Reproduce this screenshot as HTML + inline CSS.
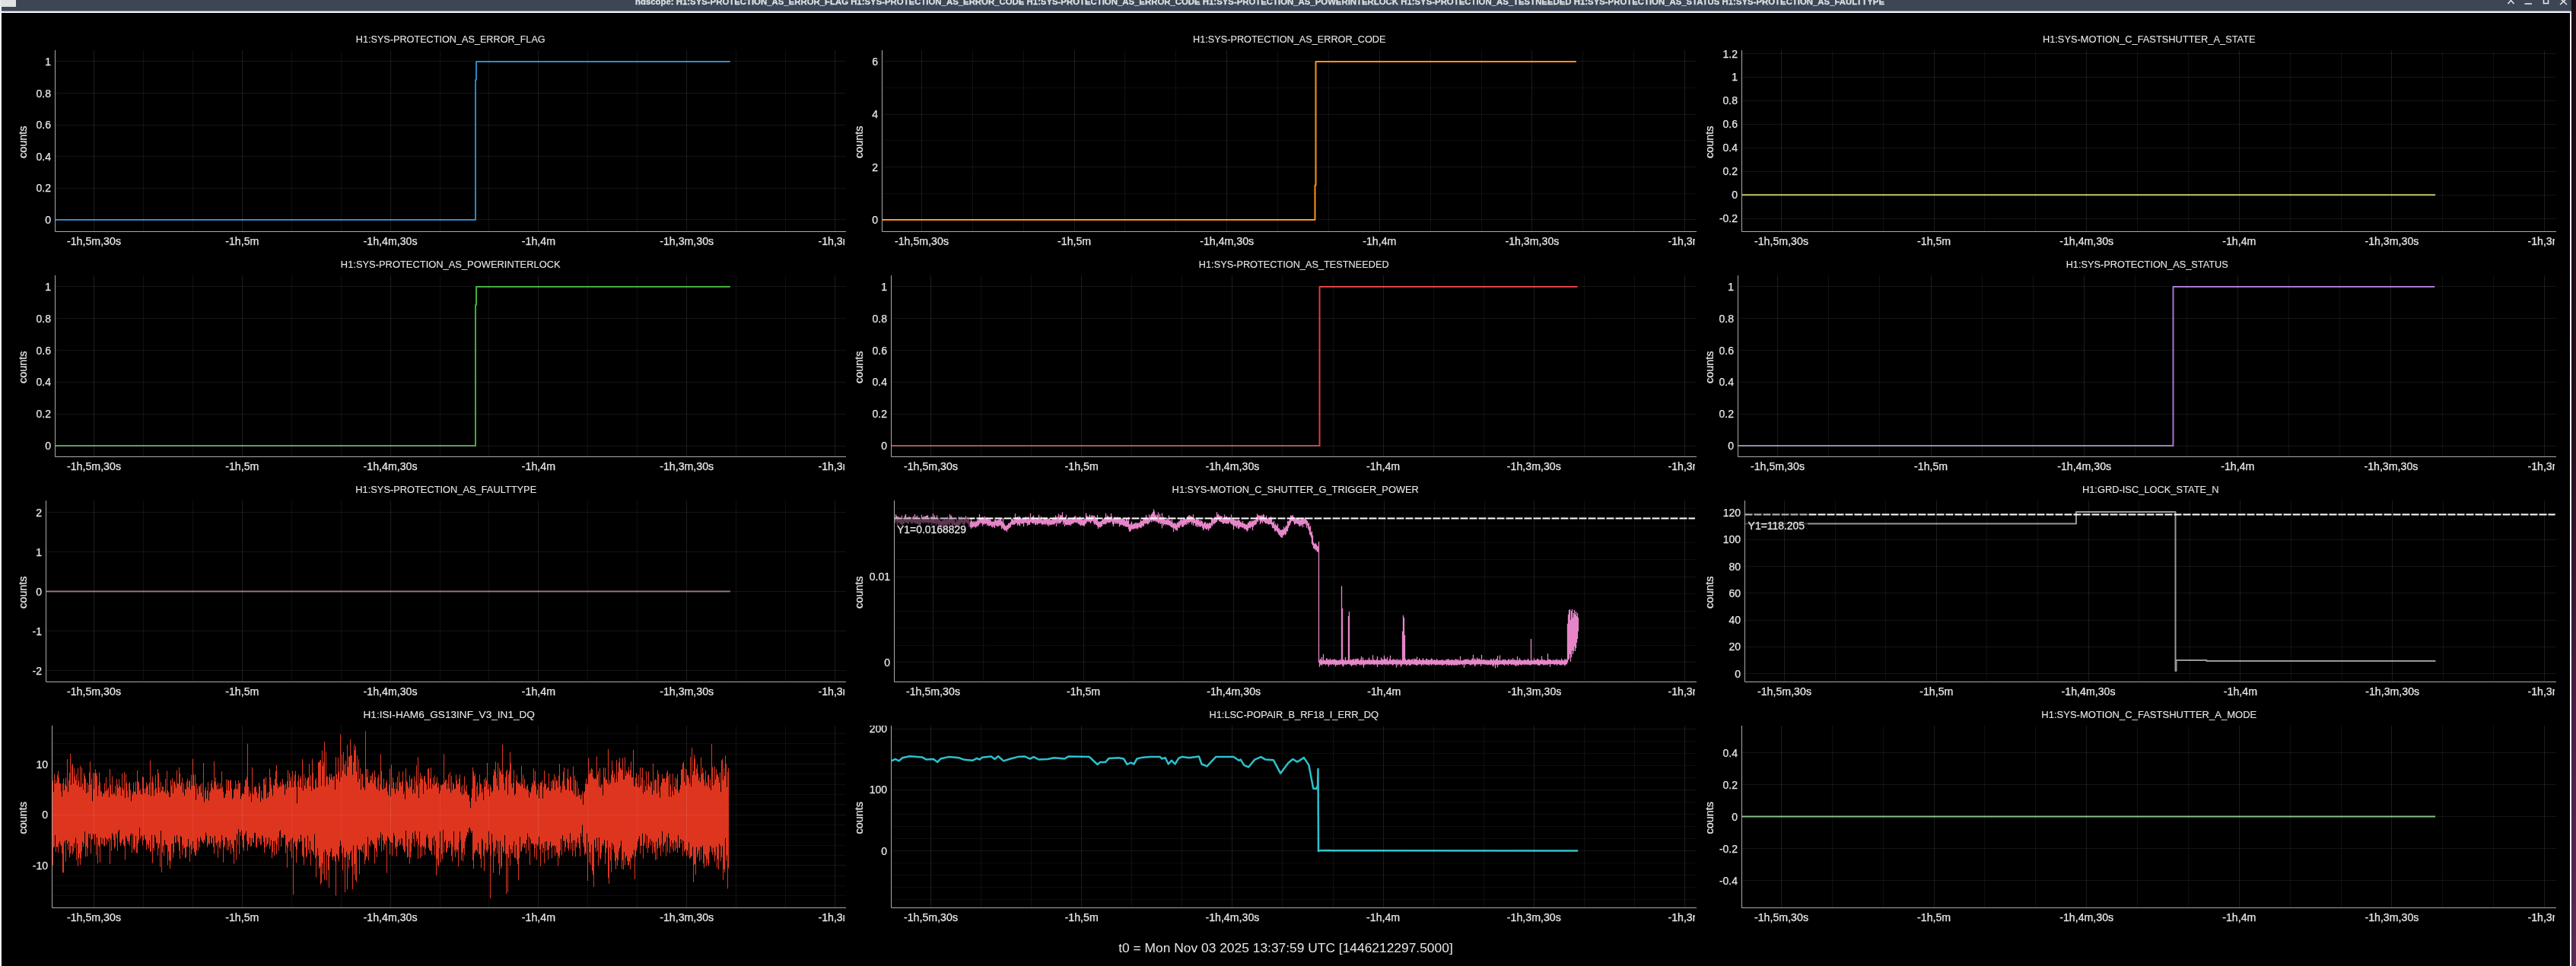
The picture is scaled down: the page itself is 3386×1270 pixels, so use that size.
<!DOCTYPE html><html><head><meta charset="utf-8"><style>html,body{margin:0;padding:0;background:#000;overflow:hidden;width:3386px;height:1270px}svg{display:block;will-change:transform}</style></head><body>
<svg width="3386" height="1270" viewBox="0 0 3386 1270" font-family='"Liberation Sans", sans-serif'>
<style>text{stroke:#e6e6e6;stroke-width:0.25px;paint-order:stroke}</style>
<rect width="3386" height="1270" fill="#000"/>
<defs><linearGradient id="dsk" x1="0" y1="0" x2="0" y2="1"><stop offset="0" stop-color="#1c0a14"/><stop offset="0.45" stop-color="#24101c"/><stop offset="0.75" stop-color="#4a2046"/><stop offset="1" stop-color="#5c2a58"/></linearGradient></defs>
<rect x="3380" y="0" width="6" height="1270" fill="url(#dsk)"/>
<rect x="0" y="0" width="3380" height="15" fill="#3c4655"/>
<rect x="0" y="14.6" width="3380" height="2.4" fill="#eef2f8"/>
<rect x="0" y="0" width="2" height="1270" fill="#eef0f4"/>
<rect x="3378" y="15" width="2" height="1270" fill="#eef0f4"/>
<rect x="1" y="0" width="20" height="9" fill="#dfe2e4"/>
<text x="835" y="6" font-size="11.5" font-weight="bold" fill="#dde1e6" textLength="1642" lengthAdjust="spacingAndGlyphs">ndscope: H1:SYS-PROTECTION_AS_ERROR_FLAG H1:SYS-PROTECTION_AS_ERROR_CODE H1:SYS-PROTECTION_AS_ERROR_CODE H1:SYS-PROTECTION_AS_POWERINTERLOCK H1:SYS-PROTECTION_AS_TESTNEEDED H1:SYS-PROTECTION_AS_STATUS H1:SYS-PROTECTION_AS_FAULTTYPE</text>
<g stroke="#e4e6ea" stroke-width="1.6" fill="none"><path d="M3296.5 5 L3300.5 0.5 L3304.5 5"/><path d="M3318.5 5 H3328"/><rect x="3343.5" y="-1" width="6" height="5.5"/><path d="M3365 6 L3374 -2 M3365 -2 L3374 6"/></g>
<defs>
<clipPath id="c00"><rect x="72.5" y="66" width="1039.5" height="238.5"/></clipPath>
<clipPath id="l00"><rect x="-127.5" y="304.5" width="1237.5" height="40"/></clipPath>
<clipPath id="t00"><rect x="-127.5" y="66" width="200" height="268.5"/></clipPath>
<clipPath id="c01"><rect x="1159.5" y="66" width="1070.5" height="238.5"/></clipPath>
<clipPath id="l01"><rect x="959.5" y="304.5" width="1268.5" height="40"/></clipPath>
<clipPath id="t01"><rect x="959.5" y="66" width="200" height="268.5"/></clipPath>
<clipPath id="c02"><rect x="2289.5" y="66" width="1070.5" height="238.5"/></clipPath>
<clipPath id="l02"><rect x="2089.5" y="304.5" width="1268.5" height="40"/></clipPath>
<clipPath id="t02"><rect x="2089.5" y="66" width="200" height="268.5"/></clipPath>
<clipPath id="c10"><rect x="72.5" y="362" width="1039.5" height="238.5"/></clipPath>
<clipPath id="l10"><rect x="-127.5" y="600.5" width="1237.5" height="40"/></clipPath>
<clipPath id="t10"><rect x="-127.5" y="362" width="200" height="268.5"/></clipPath>
<clipPath id="c11"><rect x="1171.5" y="362" width="1058.5" height="238.5"/></clipPath>
<clipPath id="l11"><rect x="971.5" y="600.5" width="1256.5" height="40"/></clipPath>
<clipPath id="t11"><rect x="971.5" y="362" width="200" height="268.5"/></clipPath>
<clipPath id="c12"><rect x="2284.5" y="362" width="1075.5" height="238.5"/></clipPath>
<clipPath id="l12"><rect x="2084.5" y="600.5" width="1273.5" height="40"/></clipPath>
<clipPath id="t12"><rect x="2084.5" y="362" width="200" height="268.5"/></clipPath>
<clipPath id="c20"><rect x="60.5" y="658" width="1051.5" height="238.5"/></clipPath>
<clipPath id="l20"><rect x="-139.5" y="896.5" width="1249.5" height="40"/></clipPath>
<clipPath id="t20"><rect x="-139.5" y="658" width="200" height="268.5"/></clipPath>
<clipPath id="c21"><rect x="1175.5" y="658" width="1054.5" height="238.5"/></clipPath>
<clipPath id="l21"><rect x="975.5" y="896.5" width="1252.5" height="40"/></clipPath>
<clipPath id="t21"><rect x="975.5" y="658" width="200" height="268.5"/></clipPath>
<clipPath id="c22"><rect x="2293.5" y="658" width="1066.5" height="238.5"/></clipPath>
<clipPath id="l22"><rect x="2093.5" y="896.5" width="1264.5" height="40"/></clipPath>
<clipPath id="t22"><rect x="2093.5" y="658" width="200" height="268.5"/></clipPath>
<clipPath id="c30"><rect x="68.5" y="954" width="1043.5" height="239.5"/></clipPath>
<clipPath id="l30"><rect x="-131.5" y="1193.5" width="1241.5" height="40"/></clipPath>
<clipPath id="t30"><rect x="-131.5" y="954" width="200" height="269.5"/></clipPath>
<clipPath id="c31"><rect x="1171.5" y="954" width="1058.5" height="239.5"/></clipPath>
<clipPath id="l31"><rect x="971.5" y="1193.5" width="1256.5" height="40"/></clipPath>
<clipPath id="t31"><rect x="971.5" y="954" width="200" height="269.5"/></clipPath>
<clipPath id="c32"><rect x="2289.5" y="954" width="1070.5" height="239.5"/></clipPath>
<clipPath id="l32"><rect x="2089.5" y="1193.5" width="1268.5" height="40"/></clipPath>
<clipPath id="t32"><rect x="2089.5" y="954" width="200" height="269.5"/></clipPath>
</defs>
<path d="M1159.5 254.5H2230M1159.5 184.5H2230M1159.5 115.5H2230" stroke="#fff" stroke-opacity="0.05" stroke-width="1" fill="none"/>
<path d="M1175.5 848.5H2230M1175.5 825.5H2230M1175.5 803.5H2230M1175.5 780.5H2230M1175.5 735.5H2230M1175.5 713.5H2230M1175.5 691.5H2230M1175.5 668.5H2230" stroke="#fff" stroke-opacity="0.05" stroke-width="1" fill="none"/>
<path d="M68.5 1191.5H1112M68.5 1177.5H1112M68.5 1164.5H1112M68.5 1151.5H1112M68.5 1124.5H1112M68.5 1111.5H1112M68.5 1097.5H1112M68.5 1084.5H1112M68.5 1057.5H1112M68.5 1044.5H1112M68.5 1031.5H1112M68.5 1017.5H1112M68.5 991.5H1112M68.5 977.5H1112M68.5 964.5H1112" stroke="#fff" stroke-opacity="0.05" stroke-width="1" fill="none"/>
<path d="M1171.5 1182.5H2230M1171.5 1166.5H2230M1171.5 1150.5H2230M1171.5 1134.5H2230M1171.5 1102.5H2230M1171.5 1086.5H2230M1171.5 1070.5H2230M1171.5 1054.5H2230M1171.5 1022.5H2230M1171.5 1006.5H2230M1171.5 990.5H2230M1171.5 974.5H2230" stroke="#fff" stroke-opacity="0.05" stroke-width="1" fill="none"/>
<path d="M72.5 289 L625 289 L625 105 L626 105 L626 81 L959.84 81" stroke="#2e86c4" stroke-width="2" fill="none" stroke-linejoin="round" />
<path d="M1159.5 289 L1728.5 289 L1728.5 243.5 L1729.5 243.5 L1729.5 81 L2071.74 81" stroke="#ff9114" stroke-width="2" fill="none" stroke-linejoin="round" />
<path d="M2289.5 256.24 L3201.07 256.24" stroke="#c0c46e" stroke-width="2" fill="none" stroke-linejoin="round" />
<path d="M72.5 586 L625 586" stroke="#5f965f" stroke-width="2" fill="none" stroke-linejoin="round" />
<path d="M625 587 L625 401 L626 401 L626 377 L959.84 377" stroke="#3caf37" stroke-width="2" fill="none" stroke-linejoin="round" />
<path d="M1171.5 586 L1734.5 586" stroke="#a85050" stroke-width="2" fill="none" stroke-linejoin="round" />
<path d="M1734.5 587 L1734.5 377 L2073.45 377" stroke="#e23a3a" stroke-width="2" fill="none" stroke-linejoin="round" />
<path d="M2284.5 586 L2856.5 586" stroke="#9682aa" stroke-width="2" fill="none" stroke-linejoin="round" />
<path d="M2856.5 587 L2856.5 377 L3200.36 377" stroke="#a573d2" stroke-width="2" fill="none" stroke-linejoin="round" />
<path d="M60.5 777.5 L959.84 777.5" stroke="#8c736e" stroke-width="2" fill="none" stroke-linejoin="round" />
<g clip-path="url(#c21)">
<path d="M1176.5 680.37V686.81M1177.5 676.15V688.23M1178.5 678.29V685.6M1179.5 679.09V690.82M1180.5 679.68V686.73M1181.5 679.44V687.56M1182.5 681.35V687.52M1183.5 681.53V689.04M1184.5 681.39V689.31M1185.5 677.71V690.94M1186.5 680.99V689.73M1187.5 681.64V688.76M1188.5 680.72V688.67M1189.5 677.66V685.89M1190.5 676.07V687.37M1191.5 681.19V687.28M1192.5 680.21V687.4M1193.5 679.44V688.5M1194.5 680.05V688.75M1195.5 679.32V685.85M1196.5 679.78V686.48M1197.5 680.1V687.68M1198.5 681.77V688.7M1199.5 680.26V687.85M1200.5 678.59V686.8M1201.5 681.35V687.2M1202.5 675.94V688.21M1203.5 679.65V688.47M1204.5 679.81V687.99M1205.5 677.81V689.31M1206.5 681.69V688.82M1207.5 681.55V689.83M1208.5 680.79V691.47M1209.5 682.51V690.94M1210.5 681.43V689.14M1211.5 676.84V685.98M1212.5 679.86V686.73M1213.5 680.25V687.93M1214.5 678.6V687.07M1215.5 679.63V686.56M1216.5 678.82V687.2M1217.5 677.96V687.59M1218.5 677.93V687.52M1219.5 677.18V686.62M1220.5 681.45V689.27M1221.5 680.63V687.3M1222.5 680.42V687.29M1223.5 679.45V686.88M1224.5 679.6V691.03M1225.5 679.81V687.35M1226.5 675.13V688.14M1227.5 679.9V688.08M1228.5 677.79V688.08M1229.5 681.09V688.47M1230.5 682.34V690.91M1231.5 677.38V687.84M1232.5 681.86V689.59M1233.5 681.72V690.21M1234.5 682.19V690.71M1235.5 683.79V692M1236.5 684.74V693.89M1237.5 684.93V690.67M1238.5 684.32V692.21M1239.5 683.85V689.68M1240.5 683.24V691.9M1241.5 681.53V689.41M1242.5 683.59V690.23M1243.5 684.01V694.6M1244.5 682.78V691.57M1245.5 679.59V689.79M1246.5 681.11V687.69M1247.5 681.46V691.16M1248.5 675.94V689.95M1249.5 679.32V687.46M1250.5 677.52V688.06M1251.5 680.26V693.07M1252.5 682.13V690.69M1253.5 683.65V690.28M1254.5 682.96V689.93M1255.5 686.17V695.33M1256.5 686.53V693.57M1257.5 681.93V692.55M1258.5 684.27V692.1M1259.5 683.64V692.46M1260.5 679.29V690.27M1261.5 681.42V690.04M1262.5 681.75V688.68M1263.5 679.18V687.57M1264.5 681.65V687.62M1265.5 681.06V689.24M1266.5 684.16V689.63M1267.5 680.88V691.35M1268.5 682.03V688.61M1269.5 678.49V686.28M1270.5 680.73V687.22M1271.5 680.15V688.19M1272.5 681.02V688.82M1273.5 682.67V692.26M1274.5 685.44V693.45M1275.5 686.36V692.83M1276.5 680.97V695.27M1277.5 684.98V693.46M1278.5 686.45V693.51M1279.5 685.21V692.42M1280.5 687V692.8M1281.5 684.87V691.89M1282.5 686.31V694.08M1283.5 685.56V692.53M1284.5 683.37V690.94M1285.5 684.21V692.19M1286.5 681.92V690.17M1287.5 676.07V688.72M1288.5 680.66V686.96M1289.5 681.11V688.15M1290.5 680.87V687.79M1291.5 679.49V691.42M1292.5 682.57V688.87M1293.5 680.5V689.79M1294.5 678.66V688.23M1295.5 681.32V689.07M1296.5 681.46V687.97M1297.5 680.58V691.11M1298.5 683.03V689.42M1299.5 682.44V691.55M1300.5 683.39V691.41M1301.5 682.08V690.82M1302.5 684.34V690.69M1303.5 685.87V692.78M1304.5 685.88V693.45M1305.5 685.34V691.03M1306.5 685.89V692.99M1307.5 683.1V694.14M1308.5 683.25V690.05M1309.5 684.58V691.49M1310.5 683.68V691.56M1311.5 683.7V692.48M1312.5 683.57V691.7M1313.5 682.66V690.89M1314.5 682.18V690.25M1315.5 681.9V691.36M1316.5 684.67V695.54M1317.5 686.22V693.54M1318.5 681.79V695.11M1319.5 687.47V696.53M1320.5 689.39V697.46M1321.5 691.23V697.11M1322.5 691.19V697.48M1323.5 690.85V699.3M1324.5 689.98V696.05M1325.5 687.82V695.63M1326.5 688.38V694.05M1327.5 686.96V693.86M1328.5 686.1V692.63M1329.5 682.38V689.53M1330.5 682.06V689.91M1331.5 682.6V689.58M1332.5 683.9V689.93M1333.5 682.69V689.39M1334.5 675.23V689.08M1335.5 679.93V687.12M1336.5 680.15V688.26M1337.5 679.28V690.82M1338.5 681.03V688.99M1339.5 678.44V690.6M1340.5 679.73V691.42M1341.5 680.77V687.54M1342.5 681.49V688.77M1343.5 681.65V688.38M1344.5 681.66V688.25M1345.5 682.23V692.14M1346.5 680.64V687.51M1347.5 680.37V687.35M1348.5 679.21V687.19M1349.5 681.09V687.8M1350.5 683.44V691.26M1351.5 679.31V689.47M1352.5 683.36V690.05M1353.5 682.25V689.67M1354.5 674.85V687.03M1355.5 680.25V686.16M1356.5 680.76V687.64M1357.5 679.04V688.21M1358.5 677.84V688.23M1359.5 681.01V686.97M1360.5 682.36V689.79M1361.5 682.97V690.25M1362.5 681.23V688.19M1363.5 682.12V690.11M1364.5 681.14V688.54M1365.5 676.86V688.61M1366.5 679.77V688.05M1367.5 681.27V687.62M1368.5 679.11V688.44M1369.5 683.25V689.8M1370.5 683.69V689.64M1371.5 682.79V689.21M1372.5 679.96V689.55M1373.5 680.62V688.79M1374.5 681.74V689.77M1375.5 680.21V687.97M1376.5 682.99V690.45M1377.5 682.55V689.74M1378.5 681.82V691.77M1379.5 682.02V689.46M1380.5 683.59V690.14M1381.5 683.55V689.99M1382.5 683.62V689.44M1383.5 681.89V689.84M1384.5 682.47V688.95M1385.5 680.24V689.63M1386.5 681.69V688.41M1387.5 677.78V687.41M1388.5 680.94V692.09M1389.5 679.25V686.56M1390.5 679.64V688.86M1391.5 675.49V687.87M1392.5 681.18V688.03M1393.5 676.98V688.13M1394.5 678.17V686.98M1395.5 677.08V685.72M1396.5 673.15V684.27M1397.5 680.57V689.46M1398.5 680.55V687.01M1399.5 681.37V692.1M1400.5 679.74V689.84M1401.5 676.69V690M1402.5 682.73V690.57M1403.5 681.48V689.44M1404.5 682.35V690.19M1405.5 681.42V690.53M1406.5 683.34V689.62M1407.5 681.82V690.92M1408.5 683.07V688.89M1409.5 681.34V687.95M1410.5 680.74V688.66M1411.5 679.92V687.02M1412.5 678.73V686.88M1413.5 678.16V686.71M1414.5 680.75V687.8M1415.5 679.65V686.38M1416.5 681.3V687.58M1417.5 682.61V688.82M1418.5 681.02V689.21M1419.5 678.78V690.24M1420.5 682.82V691.29M1421.5 682.27V690.43M1422.5 682.44V690.36M1423.5 683.73V691.17M1424.5 683.42V690.7M1425.5 682.66V691.43M1426.5 681.78V689.25M1427.5 674.56V688.36M1428.5 677.74V686.45M1429.5 678.76V685.1M1430.5 680.2V686.45M1431.5 678.57V684.9M1432.5 676.55V686.66M1433.5 680.14V688.06M1434.5 677.47V686.33M1435.5 678.71V685.01M1436.5 677.37V684.69M1437.5 678.87V687.17M1438.5 677.88V689.7M1439.5 679.54V688.31M1440.5 681.4V690.03M1441.5 682.39V690.1M1442.5 676.74V691.97M1443.5 685.74V695.25M1444.5 685.47V692.57M1445.5 685.82V693.44M1446.5 685.64V693.31M1447.5 685.04V692.56M1448.5 683.64V691.71M1449.5 682.43V688.74M1450.5 682.35V689.4M1451.5 681.03V688.71M1452.5 680.85V689.56M1453.5 674.79V689M1454.5 680.06V688.24M1455.5 677.8V686.39M1456.5 678.55V686.96M1457.5 679.45V687.55M1458.5 679.83V687.24M1459.5 679.74V686.72M1460.5 675.03V685.83M1461.5 678.72V685.85M1462.5 682.01V689.29M1463.5 681.08V692.09M1464.5 681.54V688.83M1465.5 679.23V686.48M1466.5 682.03V688.8M1467.5 680.2V687.56M1468.5 680.59V689.04M1469.5 679.61V687.32M1470.5 682.43V688.47M1471.5 680.45V692.47M1472.5 680.27V689.91M1473.5 682.23V690.51M1474.5 681.8V689.96M1475.5 681.98V689.88M1476.5 682.99V691.26M1477.5 682.56V691.63M1478.5 683.46V691.13M1479.5 684.95V692.45M1480.5 681.47V692.83M1481.5 682.2V692.74M1482.5 684.99V692.8M1483.5 679.86V695.76M1484.5 689.07V698.93M1485.5 689.99V698.7M1486.5 687.68V697.82M1487.5 685.46V695.37M1488.5 689.8V695.89M1489.5 688.48V695.62M1490.5 688.88V695.38M1491.5 687.74V695.03M1492.5 687.31V694.61M1493.5 688.13V695.23M1494.5 686.94V694.53M1495.5 687.91V695.81M1496.5 687.61V693.21M1497.5 687.42V693.4M1498.5 686.13V693.29M1499.5 683.23V694.17M1500.5 684.97V693.52M1501.5 684.68V691.21M1502.5 683.24V692.3M1503.5 681.89V691.34M1504.5 681.89V687.9M1505.5 680.71V688.65M1506.5 676.97V688.23M1507.5 680.17V688.19M1508.5 681.22V689.47M1509.5 680.79V688.79M1510.5 676.44V687.46M1511.5 680.32V686.34M1512.5 677.64V684.35M1513.5 676.12V686.53M1514.5 674.88V683.67M1515.5 673.11V685.7M1516.5 669.42V684.38M1517.5 672.33V685.16M1518.5 677.74V684.49M1519.5 676.14V686.39M1520.5 679.34V685.62M1521.5 676.9V686.15M1522.5 673.52V687.72M1523.5 680.83V688.4M1524.5 675.68V686.54M1525.5 679.69V689.06M1526.5 681.22V688.21M1527.5 674.55V694.43M1528.5 680.98V688.36M1529.5 679.57V691.04M1530.5 682.79V689.24M1531.5 683.33V689.02M1532.5 683.92V690.24M1533.5 682.57V689.32M1534.5 681.03V690.26M1535.5 683.35V689.9M1536.5 677.43V690.78M1537.5 684.77V690.71M1538.5 684.1V692.09M1539.5 686.06V693.02M1540.5 682.63V693.55M1541.5 687.52V693.7M1542.5 688.2V699.34M1543.5 686.98V694.42M1544.5 688.8V695.25M1545.5 687.79V697.26M1546.5 689.64V696.78M1547.5 686.81V697.66M1548.5 687.27V692.87M1549.5 684.96V694.21M1550.5 685.8V693.55M1551.5 683.16V690.91M1552.5 682.61V689.35M1553.5 683.18V692.53M1554.5 683.98V693.1M1555.5 682.17V692.18M1556.5 682.07V689.84M1557.5 681.42V690.42M1558.5 682.81V688.85M1559.5 681.99V690.02M1560.5 679.76V686.83M1561.5 678.98V689.24M1562.5 677.82V686.48M1563.5 677.17V687.57M1564.5 679.15V686.26M1565.5 678.22V686.04M1566.5 679.42V689.59M1567.5 679.95V686.8M1568.5 676.24V690.86M1569.5 681.65V687.7M1570.5 681.41V688.03M1571.5 683.68V690.88M1572.5 682.84V692.62M1573.5 681.86V690.07M1574.5 683.18V693M1575.5 682.98V690.58M1576.5 684.13V692.02M1577.5 685.9V693.02M1578.5 683.44V692.02M1579.5 684.86V691.26M1580.5 685.76V694.02M1581.5 688.79V697.21M1582.5 687.61V695.77M1583.5 686.18V693.44M1584.5 686.19V695.07M1585.5 689.04V696.33M1586.5 687.56V695.83M1587.5 688.1V694.81M1588.5 688.67V697.74M1589.5 686.92V695.32M1590.5 687.51V694.5M1591.5 687.71V694.27M1592.5 681.63V690.86M1593.5 680.98V691.66M1594.5 681.29V688.3M1595.5 681.77V689.59M1596.5 679.72V688.31M1597.5 679.52V687.87M1598.5 681.09V686.74M1599.5 673.28V685.7M1600.5 676.65V683.65M1601.5 675.86V683.1M1602.5 678.18V685.21M1603.5 677.73V685.55M1604.5 678.77V686.21M1605.5 678.86V686.54M1606.5 679.09V687.11M1607.5 681.04V688.88M1608.5 681.96V688.25M1609.5 676.53V687.47M1610.5 679.87V688.02M1611.5 679.35V688.18M1612.5 678.97V688.69M1613.5 681.39V687.82M1614.5 680.92V688.88M1615.5 680.41V687.17M1616.5 680.01V685.86M1617.5 680.94V687.94M1618.5 676.59V689.14M1619.5 680.23V689.36M1620.5 683.12V690.39M1621.5 680.79V696.22M1622.5 683.27V691.53M1623.5 684.29V691.5M1624.5 683.35V692.21M1625.5 684.67V693.82M1626.5 684.31V691.35M1627.5 682.46V694.99M1628.5 684.05V695.2M1629.5 684.36V693.25M1630.5 686.16V692.63M1631.5 686.31V692.42M1632.5 687.46V693.96M1633.5 685.05V693.22M1634.5 687.98V693.74M1635.5 688.57V695.85M1636.5 688.44V695.35M1637.5 689.55V695.93M1638.5 689.53V697.48M1639.5 689.58V698.64M1640.5 686.76V696.64M1641.5 686.75V694.32M1642.5 684.94V694.12M1643.5 684.86V694.8M1644.5 686.19V692.42M1645.5 684.29V692.73M1646.5 685.29V697.22M1647.5 684.46V692.62M1648.5 683.71V690.38M1649.5 683.8V690.32M1650.5 683.29V689.64M1651.5 680.02V688.86M1652.5 675.41V685.58M1653.5 677.71V686.02M1654.5 677.13V683.24M1655.5 677.73V684.22M1656.5 678.52V689.34M1657.5 677.81V686.67M1658.5 677.62V685.57M1659.5 678.43V687.92M1660.5 675.77V684.95M1661.5 676.96V685.93M1662.5 681.06V687.1M1663.5 680.75V688.42M1664.5 678.08V687.98M1665.5 682.21V688.37M1666.5 681.18V689.06M1667.5 680.56V689.87M1668.5 681.64V689.28M1669.5 682.24V688.92M1670.5 679.11V689.11M1671.5 682.01V690.21M1672.5 686.53V694.18M1673.5 686.76V694.35M1674.5 684.8V694.75M1675.5 690.2V698.36M1676.5 688.26V698.5M1677.5 690.43V697.14M1678.5 691.24V698.87M1679.5 688.5V699.99M1680.5 694.48V702.45M1681.5 694.53V703.58M1682.5 696.82V704.16M1683.5 696.55V705.96M1684.5 696.9V706.76M1685.5 696.11V706.97M1686.5 696.54V704.01M1687.5 692.43V703.19M1688.5 694.75V702.12M1689.5 693.2V703.79M1690.5 690.75V702.1M1691.5 691.7V698.37M1692.5 684.7V698.83M1693.5 685.42V694.23M1694.5 684.53V691.6M1695.5 681.7V690.13M1696.5 677.43V687.85M1697.5 678.37V685.48M1698.5 677.87V684.67M1699.5 677.31V685.03M1700.5 679.68V686.38M1701.5 680.08V689.83M1702.5 680.59V688.97M1703.5 681.74V687.89M1704.5 680.9V688.19M1705.5 681.8V688.86M1706.5 681.46V689.13M1707.5 682.03V690.89M1708.5 683.65V692.51M1709.5 683.32V690.23M1710.5 681.19V691.53M1711.5 681.98V689.62M1712.5 682.73V693.24M1713.5 680.43V689.05M1714.5 682.11V688.69M1715.5 680.16V688.18M1716.5 682.45V689.5M1717.5 684.02V693.78M1718.5 684.74V690.76M1719.5 688.23V695.15M1720.5 687.27V697.53M1721.5 692.91V702.71M1722.5 691.13V704.21M1723.5 699.55V706.77M1724.5 698.74V715.22M1725.5 703.8V716.92M1726.5 713.08V720.81M1727.5 714.73V721.46M1728.5 714.67V721.97M1729.5 714.31V723.69M1730.5 716.08V723.3M1731.5 717.83V725.73M1732.5 718.48V725.51M1733.5 717.04V726.14M1733.5 712V871M1734.5 867.88V876.72M1735.5 865.91V874.33M1736.5 867.5V873.49M1737.5 863.95V874.89M1738.5 868.37V873.26M1739.5 860.02V873.2M1740.5 868.02V873.35M1741.5 867.76V873.27M1742.5 868.39V874.18M1743.5 865.59V873.05M1744.5 865.86V873.42M1745.5 867.7V873.7M1746.5 867.11V876.45M1747.5 867.57V874.03M1748.5 865.87V873.23M1749.5 867.94V873.95M1750.5 867.5V873.68M1751.5 866.72V873.05M1752.5 867.53V873.62M1753.5 866.64V874.28M1754.5 866.59V873.47M1755.5 867.42V876.25M1756.5 867.56V873.95M1757.5 868.32V874.4M1758.5 868.19V873.97M1759.5 867.99V873.79M1760.5 868.2V874.36M1761.5 866.45V873.27M1762.5 868.37V873.54M1763.5 770.5V873.18M1764.5 800V874.64M1765.5 867.21V876.4M1766.5 867.32V874.61M1767.5 868.49V873.47M1768.5 863.92V873.15M1769.5 868.02V874.03M1770.5 868.46V873.57M1771.5 867.55V873.1M1772.5 810V873.13M1773.5 804V873.22M1774.5 868.07V873.67M1775.5 866.81V874.49M1776.5 868.03V876.11M1777.5 867.12V874.17M1778.5 867.08V874.46M1779.5 865.9V874.08M1780.5 868.2V873.94M1781.5 866.53V873.72M1782.5 865.7V875.42M1783.5 867.09V873.26M1784.5 865.8V873.35M1785.5 866.08V873.14M1786.5 868.19V873.17M1787.5 868.23V874.7M1788.5 866.38V873.86M1789.5 863.02V874.29M1790.5 868.07V873.04M1791.5 864.52V874.78M1792.5 867.78V877.67M1793.5 868.34V873.77M1794.5 867.45V873.99M1795.5 867.45V873.27M1796.5 867.88V873.6M1797.5 867.28V873.22M1798.5 867.43V873.48M1799.5 864.54V873.62M1800.5 867.09V873.7M1801.5 868.19V873.8M1802.5 867.3V873.6M1803.5 868.18V873.24M1804.5 861.26V873.6M1805.5 867.03V873.6M1806.5 867.6V874.33M1807.5 868.12V873.48M1808.5 868.03V873.26M1809.5 866.86V873.75M1810.5 862.64V876.88M1811.5 868.24V873.7M1812.5 867.8V873.21M1813.5 868.09V873.48M1814.5 868.24V873.16M1815.5 864.51V874.24M1816.5 866.73V873.64M1817.5 866.38V874.57M1818.5 867.44V873.14M1819.5 861.63V873.05M1820.5 866.06V873.72M1821.5 866.53V874.2M1822.5 866.78V873.27M1823.5 864.05V873.5M1824.5 868.46V874.65M1825.5 868.35V873.36M1826.5 866.33V873.56M1827.5 861.8V873.25M1828.5 867.43V873.44M1829.5 868.09V873.52M1830.5 867.05V874.7M1831.5 866.28V874.14M1832.5 867.87V873.11M1833.5 866.99V873.26M1834.5 867.78V873.38M1835.5 867.44V877.63M1836.5 866.21V873.13M1837.5 868.22V874.65M1838.5 867.22V873.19M1839.5 868.08V873.27M1840.5 866.62V873.99M1841.5 868.45V876.82M1842.5 867.65V874.71M1843.5 830V873.54M1844.5 809V873.24M1845.5 812V873.52M1846.5 835V873.67M1847.5 866.2V873.03M1848.5 867.98V875.15M1849.5 867.93V874.33M1850.5 866.77V873.87M1851.5 866.6V873.32M1852.5 867.05V875.07M1853.5 867.34V874.56M1854.5 867.46V874.56M1855.5 866.95V873.3M1856.5 866.26V873.35M1857.5 868.4V873.66M1858.5 865.66V873.1M1859.5 866.73V874.1M1860.5 866.23V873.67M1861.5 867.08V874.56M1862.5 863.4V874.96M1863.5 867.98V873.96M1864.5 868.04V873.6M1865.5 865.54V873.57M1866.5 866.71V873.52M1867.5 868.35V873.27M1868.5 868.06V875.49M1869.5 867.13V873.88M1870.5 865.25V873.01M1871.5 867.59V874.75M1872.5 867.69V873M1873.5 868.14V873.71M1874.5 866.05V873.65M1875.5 866.02V873.92M1876.5 867.5V873.76M1877.5 867.53V874.2M1878.5 867.24V874.95M1879.5 868.06V873.05M1880.5 867.17V873.38M1881.5 865.61V874.65M1882.5 865.88V873.61M1883.5 868.14V873.14M1884.5 867.83V873.63M1885.5 867.19V873.29M1886.5 867.84V874.41M1887.5 868V874.48M1888.5 866.34V873.85M1889.5 867.5V873.93M1890.5 868.44V873.61M1891.5 868.12V873.94M1892.5 868.07V873.79M1893.5 867.9V873.97M1894.5 867.49V873.61M1895.5 867.69V875.1M1896.5 867.03V874.32M1897.5 868.43V874.13M1898.5 868.48V873.8M1899.5 867.45V873.15M1900.5 868.45V873.29M1901.5 866.63V874.89M1902.5 867.02V873.54M1903.5 866.49V873.95M1904.5 866.41V875.06M1905.5 868.3V873.99M1906.5 867.79V873.84M1907.5 867.47V874.86M1908.5 867.14V874.88M1909.5 867.27V873.42M1910.5 867.66V874.14M1911.5 868.13V874.91M1912.5 867.37V874.21M1913.5 866.27V874.28M1914.5 866.91V874.65M1915.5 867.99V874.32M1916.5 866.57V874.13M1917.5 868.41V873.44M1918.5 868.11V873.89M1919.5 862.86V873.75M1920.5 868.43V873.34M1921.5 868.37V873.27M1922.5 868.21V874.39M1923.5 867.67V873.29M1924.5 867.24V877.65M1925.5 866.98V873.21M1926.5 867.07V874.17M1927.5 866.77V873.1M1928.5 866.15V873.05M1929.5 868V873.03M1930.5 866.61V873.43M1931.5 868.04V873.54M1932.5 867.77V874.53M1933.5 867.85V874.48M1934.5 866.62V873.57M1935.5 865.73V873.72M1936.5 860.78V873.26M1937.5 867.8V873.57M1938.5 865.79V875.98M1939.5 866.79V874.69M1940.5 868.01V873.28M1941.5 864.59V873.55M1942.5 866.11V873.28M1943.5 867.07V873.46M1944.5 865.68V873.29M1945.5 867.12V873.13M1946.5 867.55V875.63M1947.5 860.77V873.5M1948.5 868.12V873.07M1949.5 867.46V873.38M1950.5 866.65V873.14M1951.5 867.44V873.55M1952.5 867.89V873.48M1953.5 867.17V874.18M1954.5 868.43V873.33M1955.5 867.54V874.4M1956.5 867.98V874.06M1957.5 868.12V873.21M1958.5 868.33V873.99M1959.5 866.32V874.23M1960.5 866.46V873.26M1961.5 868.13V874.47M1962.5 867.61V876.41M1963.5 865.72V874.63M1964.5 868.23V873.56M1965.5 867.87V878.45M1966.5 866.23V873.64M1967.5 866.13V874M1968.5 862.21V877.29M1969.5 867.96V874.03M1970.5 868.13V874.02M1971.5 861.5V873.27M1972.5 868.15V873.38M1973.5 868.44V873.56M1974.5 867.57V873.12M1975.5 867.22V873.7M1976.5 867.06V873.93M1977.5 867.67V875.12M1978.5 866.57V873.29M1979.5 867.91V873.44M1980.5 868.23V873.73M1981.5 868.24V873.4M1982.5 866.79V874.91M1983.5 866.33V873.06M1984.5 868.27V873.11M1985.5 867.48V873.43M1986.5 866.72V874.14M1987.5 867.99V873.77M1988.5 865.22V873.6M1989.5 867.55V874.01M1990.5 866.8V873.79M1991.5 868.25V874.84M1992.5 867.66V875.96M1993.5 867.73V874.41M1994.5 862.96V873.77M1995.5 868.3V875.58M1996.5 867.52V874.12M1997.5 865.16V873.15M1998.5 867.35V873.76M1999.5 868.17V874.69M2000.5 868.06V873.97M2001.5 868.42V873.44M2002.5 868.34V873.22M2003.5 867.06V874.42M2004.5 867.66V873.04M2005.5 867.57V874.12M2006.5 868.14V873.35M2007.5 867.53V874.06M2008.5 865.97V873.18M2009.5 867.14V874.21M2010.5 868.49V873.96M2011.5 868.48V874.78M2012.5 840V873.71M2013.5 867.57V873.63M2014.5 868.21V873.24M2015.5 868.47V873.24M2016.5 865.57V873.39M2017.5 868.07V873.64M2018.5 867.38V873.39M2019.5 868.03V873.13M2020.5 866.08V873.78M2021.5 866.1V874.53M2022.5 867.26V874.76M2023.5 868.22V875.26M2024.5 867.23V873.5M2025.5 867.86V873.81M2026.5 862.46V873.07M2027.5 867.05V873.17M2028.5 868.35V874.17M2029.5 867.06V874.43M2030.5 867.72V873.75M2031.5 868.25V874.34M2032.5 868.43V873.26M2033.5 867.72V874.55M2034.5 859.31V873.87M2035.5 866.96V873.17M2036.5 866.69V873.07M2037.5 866.97V876.77M2038.5 867.39V873.21M2039.5 868.36V873.19M2040.5 868.49V873.02M2041.5 866.9V873.36M2042.5 868.46V873.51M2043.5 867.47V873.92M2044.5 867.61V873.26M2045.5 867.23V873.3M2046.5 866.42V874.93M2047.5 868.15V873.18M2048.5 867.43V873.09M2049.5 867.57V873.76M2050.5 867.84V874.36M2051.5 868.43V874.46M2052.5 865.82V874.52M2053.5 867.15V873.78M2054.5 868.47V873.73M2055.5 868.28V873.35M2056.5 866.59V875.17M2057.5 867.61V874.41M2058.5 866.3V873.45M2059.5 867.65V873.18M2060.5 820V871M2061.5 808V868M2062.5 802V866M2063.5 801V860M2064.5 815V870M2065.5 803V864M2066.5 801V855M2067.5 812V860M2068.5 806V856M2069.5 802V850M2070.5 808V856M2071.5 804V852M2072.5 810V845M2073.5 806V840M2074.5 812V830" stroke="#e585c8" stroke-width="1.3" fill="none"/>
</g>
<rect x="1175.5" y="682" width="99.5" height="21" fill="#000" fill-opacity="0.6"/>
<path d="M1175.5 681.5H2228" stroke="#ffffff" stroke-width="2" stroke-dasharray="10 2"/>
<rect x="1175.5" y="680" width="99.5" height="3" fill="#000" fill-opacity="0.25"/>
<text x="1179" y="700.5" font-size="14" fill="#e6e6e6" textLength="91" lengthAdjust="spacingAndGlyphs">Y1=0.0168829</text>
<path d="M2293.5 688.5 L2729 688.5 L2729 673 L2859.5 673 L2859.5 882 L2860.5 882 L2860.5 868 L2900.5 868 L2900.5 869 L3201.4 869" stroke="#989898" stroke-width="2" fill="none" stroke-linejoin="round" />
<rect x="2293.5" y="677" width="82.5" height="21" fill="#000" fill-opacity="0.6"/>
<path d="M2293.5 676.5H3358.6" stroke="#ffffff" stroke-width="2" stroke-dasharray="10 2"/>
<rect x="2293.5" y="675" width="82.5" height="3" fill="#000" fill-opacity="0.25"/>
<text x="2297.6" y="695.7" font-size="14" fill="#e6e6e6" textLength="74.5" lengthAdjust="spacingAndGlyphs">Y1=118.205</text>
<path d="M69.5 1026.24V1137.52M70.5 1041.03V1114.19M71.5 1017.92V1113.3M72.5 1030.21V1097.82M73.5 1025.12V1120.1M74.5 1029.28V1113.23M75.5 1018.98V1113.73M76.5 1013.76V1120.98M77.5 1022.52V1108.97M78.5 1029.81V1106.09M79.5 1029.86V1110.7M80.5 1040.23V1111.94M81.5 1047.46V1122.42M82.5 1029.76V1147.29M83.5 1023.51V1147.29M84.5 1039V1107.93M85.5 1031.59V1105.29M86.5 1022.4V1132.56M87.5 1033.41V1104.19M88.5 998V1109.33M89.5 1041.45V1117.55M90.5 1025.93V1106.34M91.5 1016.07V1127.23M92.5 990.79V1122.03M93.5 1031.95V1112.39M94.5 1006.56V1112.54M95.5 1004.1V1123.04M96.5 1030.11V1119.79M97.5 1010.16V1108.64M98.5 1020.74V1114.94M99.5 1025.6V1101.52M100.5 1017.85V1130.7M101.5 1032.31V1109.03M102.5 1009.6V1138.4M103.5 1026.38V1128.12M104.5 1034.53V1122.34M105.5 1006.63V1136.88M106.5 1034.39V1128.56M107.5 1009.1V1119.14M108.5 1030.05V1106.54M109.5 1038.18V1113.53M110.5 1016.21V1109.23M111.5 1019.63V1093.14M112.5 1023.6V1126.43M113.5 1042.87V1112.78M114.5 1028.76V1126.01M115.5 1041.84V1115.25M116.5 1031.75V1096.29M117.5 1015.51V1102.07M118.5 1001.2V1096.15M119.5 1031.35V1122.32M120.5 1023.25V1103.65M121.5 1053.2V1103.19M122.5 1016.18V1096.39M123.5 1037.35V1096.98M124.5 1016.44V1110.49M125.5 1011.31V1096.45M126.5 1016.22V1124.56M127.5 1019.94V1101.13M128.5 1046.32V1135.2M129.5 1032.76V1110.74M130.5 1015.56V1113.06M131.5 1028.42V1133.85M132.5 1040.25V1101M133.5 1040.5V1109.7M134.5 1047.16V1109.75M135.5 1042.72V1102.62M136.5 1043.44V1111.62M137.5 1029.57V1112.42M138.5 1040.41V1100.99M139.5 1021.66V1102.74M140.5 1039.47V1110.54M141.5 1037.41V1103.66M142.5 1035.32V1106.62M143.5 1047.99V1101.54M144.5 1010.91V1136.05M145.5 1031.96V1103.44M146.5 1043.87V1118.89M147.5 1020.56V1095.25M148.5 1044.73V1097.63M149.5 1041.69V1104.31M150.5 1043.55V1115.54M151.5 1033.1V1112.94M152.5 1046.29V1096.27M153.5 1023.85V1101.85M154.5 1031.56V1118.94M155.5 1035.87V1093.29M156.5 1024.34V1090.97M157.5 1033.69V1107.58M158.5 1034.91V1111.91M159.5 1046.15V1108.77M160.5 1016.95V1105.26M161.5 1036.33V1103.24M162.5 1038.47V1110.8M163.5 1015.12V1112.71M164.5 1049.01V1130.45M165.5 1017.75V1099.23M166.5 1029.37V1102.03M167.5 1039.77V1105.55M168.5 1048.21V1109.77M169.5 1029.76V1106.03M170.5 1028.33V1111.58M171.5 1038.55V1098.2M172.5 1053.28V1095.57M173.5 1045.65V1121.07M174.5 1041.95V1096.7M175.5 1028.64V1116.13M176.5 1040.36V1118.51M177.5 1041.02V1114.4M178.5 1027.78V1099.03M179.5 1044.43V1120.95M180.5 1012.79V1122.16M181.5 1027.03V1109.07M182.5 1028.62V1104.63M183.5 1039.64V1088.54M184.5 1036.99V1102.84M185.5 1043.91V1098.56M186.5 1044.34V1099.57M187.5 1020.67V1111.15M188.5 1021.85V1104.9M189.5 1036.79V1097.67M190.5 1042.87V1102.68M191.5 1036.31V1104.59M192.5 1028.38V1117.55M193.5 1033.63V1109.6M194.5 1031.16V1111.21M195.5 1044.71V1115.7M196.5 1029.11V1104.95M197.5 999.88V1120.1M198.5 1046.51V1119.16M199.5 1027.83V1097.65M200.5 1020.69V1134.76M201.5 1028.75V1114.82M202.5 1046.1V1118.31M203.5 1037.8V1097.88M204.5 1018.9V1101.47M205.5 1035.63V1108.89M206.5 1042.43V1108.25M207.5 1011.03V1124.74M208.5 1016.79V1115.43M209.5 1034.86V1109.35M210.5 1041.76V1139.77M211.5 1027.8V1092.11M212.5 1039.58V1147.01M213.5 1034.05V1120.89M214.5 1033.93V1112.03M215.5 1041.48V1125.24M216.5 1039.51V1104.21M217.5 1023.99V1109.88M218.5 1043.3V1110.94M219.5 1013.5V1111.22M220.5 1039.28V1137.37M221.5 1041.47V1119.31M222.5 1047.66V1131.04M223.5 1047.66V1142.11M224.5 1025.65V1132.28M225.5 1032.92V1109.8M226.5 1023.31V1109.01M227.5 1042.98V1127.88M228.5 1028.03V1120.74M229.5 1027.19V1099.36M230.5 1031.31V1108.24M231.5 1035.9V1108.29M232.5 1012.67V1098.05M233.5 1029.76V1106.18M234.5 1030.56V1107.8M235.5 1008.84V1118.23M236.5 1016.94V1129.04M237.5 1033.19V1099.12M238.5 1028.63V1100.73M239.5 1022.27V1123.67M240.5 1041.91V1110.82M241.5 1029.56V1115.75M242.5 1046.15V1114.41M243.5 1036.85V1128.29M244.5 1037.87V1126.99M245.5 1027.42V1113.56M246.5 1023.88V1112.86M247.5 1035.32V1103.03M248.5 1027.18V1114.14M249.5 1025.73V1132.75M250.5 1037.95V1110.81M251.5 1018.66V1123.08M252.5 1032.74V1116.81M253.5 997.7V1105.81M254.5 1018.59V1115.12M255.5 1033.35V1120.44M256.5 1018.63V1124.74M257.5 1051.81V1124.86M258.5 1029.7V1118.17M259.5 1036.46V1101.82M260.5 1044.24V1118.03M261.5 1032.9V1106.18M262.5 1034.37V1114.2M263.5 1031.34V1100.39M264.5 1041.88V1103.9M265.5 1029.53V1106.35M266.5 1047.15V1107.77M267.5 1003.15V1109.31M268.5 1054.72V1103.85M269.5 1039.27V1107.33M270.5 1034.58V1094.71M271.5 1050.06V1098.71M272.5 1039.36V1114.01M273.5 1028.07V1110.58M274.5 1052.44V1108.36M275.5 1041.87V1110.41M276.5 1039.88V1099.09M277.5 1029.76V1107.67M278.5 1025.72V1109.36M279.5 1035.28V1101.42M280.5 1037.81V1113.79M281.5 1000.76V1122.37M282.5 1027.54V1098.95M283.5 1021.89V1108.45M284.5 1031.99V1111.54M285.5 1037.61V1108.08M286.5 1029.35V1127.62M287.5 1037.74V1105.53M288.5 1036.93V1114.18M289.5 1029.58V1116.15M290.5 1036.76V1107.56M291.5 1014.06V1097.93M292.5 1034.65V1104.6M293.5 1040.72V1133.96M294.5 1049.04V1114.18M295.5 1048.52V1111.22M296.5 1043.6V1101.04M297.5 1024.66V1101.02M298.5 1038.8V1118.04M299.5 1025.1V1105.38M300.5 1026.35V1117.39M301.5 1039.34V1112.79M302.5 1025.7V1103.96M303.5 1025.67V1122.87M304.5 1036.61V1109.8M305.5 1050.57V1114.97M306.5 1048.44V1119.58M307.5 1038.33V1135.71M308.5 1036.42V1104M309.5 1026.44V1104.94M310.5 1037.68V1130.7M311.5 1030.64V1096.3M312.5 1037.4V1110.51M313.5 1025.85V1090.03M314.5 1029.97V1122.96M315.5 1028.85V1093.82M316.5 1050.41V1098.79M317.5 1046.08V1091.63M318.5 1043.26V1104.42M319.5 1043.28V1114.33M320.5 1044.04V1118.68M321.5 1034.28V1098.1M322.5 1024.35V1096.05M323.5 1026.06V1092.71M324.5 1021.49V1105.55M325.5 977.7V1118.6M326.5 1034.07V1110.33M327.5 1047.26V1109.17M328.5 1039.26V1101.2M329.5 1043.1V1113.01M330.5 1054.14V1112.14M331.5 1008.86V1102.06M332.5 1042.67V1107.27M333.5 1044.71V1107.97M334.5 1035.28V1095.03M335.5 1033.72V1094.91M336.5 1034.22V1113.63M337.5 1041.31V1114.8M338.5 1048.98V1102.91M339.5 1043.51V1100.52M340.5 1029.12V1107.02M341.5 1033.36V1102.42M342.5 1054.09V1110.74M343.5 1039.31V1110.54M344.5 1048.04V1098.37M345.5 1050.63V1099.58M346.5 1024.3V1107.12M347.5 1023.53V1121.42M348.5 1031.69V1114.2M349.5 1021.42V1101.44M350.5 1050.04V1113.14M351.5 1042.25V1110.15M352.5 1048.03V1108.99M353.5 1041.05V1101M354.5 1010.84V1116.04M355.5 1022.19V1111.52M356.5 1031.67V1104.18M357.5 1036.55V1128.22M358.5 1046.19V1120.36M359.5 1031.69V1106.14M360.5 1032.97V1124.78M361.5 1024.33V1105.19M362.5 1013.61V1109.39M363.5 1005.79V1123.16M364.5 1029.76V1111.1M365.5 1036.36V1101.39M366.5 1033.13V1118.43M367.5 1034.61V1093.22M368.5 1028.1V1091.5M369.5 1033.94V1113.15M370.5 1031.36V1100.71M371.5 1024.07V1101.6M372.5 1030.52V1101.97M373.5 1032.26V1097.39M374.5 1045.21V1097.89M375.5 1030.27V1121.69M376.5 1037.34V1111.32M377.5 1027V1140.71M378.5 1012.34V1114.21M379.5 1035.14V1106.81M380.5 1016.42V1106.41M381.5 1026.78V1119.27M382.5 1021.19V1103.5M383.5 1035.11V1127.83M384.5 1013.42V1101.4M385.5 1034.9V1176.32M386.5 1026.96V1108.7M387.5 1018.53V1106.16M388.5 1013.64V1113.08M389.5 1034.32V1134.14M390.5 1056.34V1116.89M391.5 1026.55V1106.49M392.5 1018.81V1103.16M393.5 1034.54V1107.73M394.5 1023.63V1106.27M395.5 1020.33V1097.16M396.5 1035.87V1105.88M397.5 998.1V1124.91M398.5 1039.47V1126.54M399.5 1017.63V1137.08M400.5 1032.79V1101.46M401.5 1022.45V1114.22M402.5 1036.48V1127.49M403.5 1025.63V1125.71M404.5 1022.73V1098.72M405.5 1021.64V1116.79M406.5 1004.59V1122.53M407.5 1033.51V1105.66M408.5 1019.09V1137.83M409.5 1039.73V1116.85M410.5 997.6V1118.94M411.5 1015.82V1120.06M412.5 1036.48V1124.05M413.5 1037.78V1096.68M414.5 1025.44V1128.11M415.5 1022.48V1153.45M416.5 1035.1V1125.26M417.5 1035.2V1114.86M418.5 1001.97V1125.12M419.5 1002.21V1142.13M420.5 999.92V1139.33M421.5 999.1V1162.92M422.5 1032.94V1160.51M423.5 986.64V1134.86M424.5 1006.85V1149.17M425.5 1001.5V1120.42M426.5 974.86V1156.56M427.5 1033.45V1117.09M428.5 988.51V1120.19M429.5 1021.32V1157.58M430.5 1020.38V1124.11M431.5 1031.73V1143.82M432.5 1021.65V1167.3M433.5 1017.53V1126.09M434.5 1024.77V1119.99M435.5 1017.25V1115.37M436.5 1021.88V1126.66M437.5 1025.56V1131.07M438.5 1020.76V1125.91M439.5 1020.31V1126.22M440.5 1038.29V1132.57M441.5 995.2V1177.47M442.5 1017.92V1122.87M443.5 1024.08V1124.92M444.5 996.16V1128.67M445.5 1014.61V1132.36M446.5 1027.71V1113.29M447.5 965.54V1105.28M448.5 1021.62V1111.3M449.5 991.82V1121.86M450.5 1013.15V1144.57M451.5 988.74V1114.6M452.5 1004.84V1127.07M453.5 1017.58V1172.99M454.5 1000.27V1127.21M455.5 1020.42V1119.93M456.5 979.28V1169.08M457.5 1008.22V1123.59M458.5 993.9V1141.6M459.5 994.92V1130.49M460.5 972.11V1121.25M461.5 993.16V1118.36M462.5 992.7V1138.95M463.5 1018.76V1168.91M464.5 1002.06V1111.56M465.5 978.81V1150M466.5 986.2V1135.63M467.5 980.79V1156.81M468.5 1014.62V1159.66M469.5 993.13V1111.33M470.5 1028.28V1115.91M471.5 998.3V1117.37M472.5 1024.05V1149.3M473.5 1010.11V1117.41M474.5 1038.34V1117.88M475.5 1017.68V1120.07M476.5 1017.14V1111.8M477.5 1035.4V1121.88M478.5 1034.29V1109.42M479.5 1038.74V1136.41M480.5 961.18V1130.73M481.5 1010.81V1125.43M482.5 1021.73V1127.36M483.5 1011.09V1100.3M484.5 1028.93V1131.45M485.5 1029.5V1110.42M486.5 1019.65V1112.91M487.5 1025.51V1105.29M488.5 1019.57V1104.23M489.5 1015.57V1107.69M490.5 1029.75V1109.96M491.5 1025.32V1110.5M492.5 1012.7V1135.18M493.5 1021.47V1115.3M494.5 1034.16V1119.2M495.5 1037.61V1126.88M496.5 1022.44V1101.43M497.5 1018.57V1104.66M498.5 1039.6V1111.6M499.5 1031.11V1101.76M500.5 991.47V1094.4M501.5 1013.38V1119.63M502.5 1037.25V1097.46M503.5 1038.09V1105.31M504.5 1023.59V1117.78M505.5 1036.87V1109.32M506.5 1035.4V1111.57M507.5 1029.24V1105.24M508.5 1025.82V1147.69M509.5 1040.39V1099.62M510.5 1045.76V1101.54M511.5 1031.61V1103.73M512.5 1010.49V1123.2M513.5 1047.09V1106.63M514.5 1005.65V1108.15M515.5 1036.44V1125.19M516.5 1022.26V1107.88M517.5 1028.59V1095.34M518.5 1036.94V1098.87M519.5 1043.44V1116.01M520.5 1028.58V1113.33M521.5 1037.14V1125.94M522.5 1020.92V1113.5M523.5 1039.91V1106.98M524.5 1014.25V1103.59M525.5 1028.68V1111.92M526.5 1027.98V1109.76M527.5 1033.38V1102.12M528.5 1027.37V1102.83M529.5 1014.28V1112M530.5 1043.71V1116.86M531.5 1040.23V1120.62M532.5 1050.58V1119.35M533.5 1010.23V1091.97M534.5 1026.8V1112.9M535.5 1028.24V1127.62M536.5 1033.68V1126.52M537.5 1036.8V1103.31M538.5 1019.22V1135.76M539.5 1034.26V1127.09M540.5 1024.62V1119.67M541.5 1022.68V1108.26M542.5 1043.13V1094.82M543.5 1037.67V1102.85M544.5 1020.4V1113.24M545.5 1042.99V1092.46M546.5 1026.99V1097.84M547.5 1006.43V1106.45M548.5 1032.54V1102.84M549.5 995.31V1129.15M550.5 1049.07V1110.71M551.5 1029.52V1093.23M552.5 1015.96V1128.15M553.5 1023.47V1113.36M554.5 1019.93V1125.66M555.5 1024.54V1111.03M556.5 1043.45V1114.19M557.5 1020.78V1112.74M558.5 1019.97V1123.99M559.5 1028V1115.47M560.5 1030.73V1100.56M561.5 1038.11V1096.89M562.5 1010.8V1102.48M563.5 1010.04V1114.71M564.5 1036.29V1117.56M565.5 1023.28V1118.74M566.5 1009.23V1118.78M567.5 1036.61V1123.99M568.5 1030.68V1101.9M569.5 1021.92V1111.66M570.5 1032.78V1099.18M571.5 1019.47V1124.11M572.5 1030.87V1105.42M573.5 1028.79V1150.7M574.5 1021.53V1128.83M575.5 1035.32V1137.16M576.5 1029.17V1139.18M577.5 1043.32V1114.88M578.5 1039.66V1092.9M579.5 1031.97V1133.56M580.5 1032.39V1122.76M581.5 1031.44V1129.67M582.5 1030.74V1091.09M583.5 991.45V1120.78M584.5 1028.49V1107.13M585.5 1025.55V1104M586.5 1024.9V1121.42M587.5 1037.58V1119.54M588.5 1029.86V1114.86M589.5 1018.15V1106.1M590.5 1036.83V1114.25M591.5 1014.94V1105.46M592.5 1042.33V1110.07M593.5 1019.52V1125.2M594.5 1038.61V1132.67M595.5 1028.78V1113.45M596.5 1030.81V1093M597.5 1037.51V1118.28M598.5 1036.56V1126.7M599.5 1018.64V1116.49M600.5 1025.98V1120.31M601.5 1031.14V1117.38M602.5 1030.48V1139.35M603.5 1023.71V1107.26M604.5 1018.19V1093.08M605.5 1041.8V1103.9M606.5 1033.55V1130.93M607.5 1045.28V1120.59M608.5 1032.05V1132.52M609.5 1043.77V1115.48M610.5 1020.79V1124.14M611.5 1037.73V1106.56M612.5 1040.68V1102.03M613.5 1031.92V1098.7M614.5 1044.16V1094.05M615.5 1045.83V1095.31M616.5 1044.71V1089.07M617.5 1053.35V1087.88M618.5 1062.28V1091.38M619.5 1048.82V1095.3M620.5 1036.87V1092.74M621.5 1008.91V1131.11M622.5 1014.47V1141.86M623.5 1020.41V1122.22M624.5 1017.21V1119.27M625.5 1053.66V1117.7M626.5 1033.05V1117.5M627.5 1028.58V1120.22M628.5 1047.25V1108.29M629.5 1043.59V1122.87M630.5 1018.31V1123.37M631.5 1030.05V1129M632.5 1031.4V1140.91M633.5 1041.8V1102.65M634.5 1036.47V1105.2M635.5 1052.09V1125.43M636.5 1024.33V1145.24M637.5 1034V1116.24M638.5 1022.43V1108.55M639.5 1026.48V1118.47M640.5 1002.96V1120.75M641.5 1037.64V1116.68M642.5 1030.97V1092.89M643.5 1046.63V1110.46M644.5 1031.92V1181.12M645.5 1035.11V1124.94M646.5 1041.68V1096.52M647.5 1039.85V1107.72M648.5 1019.35V1147.6M649.5 1011.14V1118.86M650.5 1014.4V1126.08M651.5 1001.35V1114.78M652.5 1022.88V1104.56M653.5 1033.12V1122.48M654.5 1002.94V1106.24M655.5 1038.62V1134.94M656.5 1009.8V1150.45M657.5 1014.66V1105.39M658.5 1012.29V1142.16M659.5 1017.98V1138.52M660.5 978.86V1112.75M661.5 1017.56V1121.29M662.5 1029.42V1119.13M663.5 1038.78V1097.9M664.5 1021.54V1122.79M665.5 1014V1175.12M666.5 1011.64V1122.68M667.5 1044.44V1172.85M668.5 1018.48V1127.94M669.5 1014.06V1110.83M670.5 988.54V1138.28M671.5 1003.62V1116.47M672.5 1030V1122.04M673.5 1035.71V1121.67M674.5 1029.09V1112.49M675.5 1012.32V1105.94M676.5 1045.68V1127.66M677.5 1043.26V1127.93M678.5 1026.73V1110.85M679.5 1018.76V1130.26M680.5 1028.71V1136.22M681.5 1029.44V1157.42M682.5 1031.07V1128.22M683.5 1028.52V1100.16M684.5 1033.23V1119.45M685.5 1006.98V1119.52M686.5 1030.87V1113.4M687.5 1018.59V1109.09M688.5 1036.23V1109.25M689.5 1023.75V1114.79M690.5 1035.87V1109.44M691.5 1038.16V1122.37M692.5 1033.37V1104.1M693.5 1031.45V1095.64M694.5 1038.47V1118.39M695.5 1048.4V1100.19M696.5 1040.77V1137.01M697.5 1042.13V1103.32M698.5 1035.04V1109.43M699.5 1028.64V1108.92M700.5 1031.67V1109.22M701.5 1010.44V1110.47M702.5 1026.65V1126.84M703.5 1013.59V1115.14M704.5 1032.88V1109.29M705.5 1044.66V1130.35M706.5 1038.29V1112.09M707.5 1030.32V1110.03M708.5 1049.66V1099.83M709.5 1032.77V1117.25M710.5 1028.26V1138.98M711.5 1028.98V1111.17M712.5 1025.77V1109.2M713.5 1049.8V1121.23M714.5 1034.37V1114.67M715.5 1013V1135.19M716.5 1030.81V1106.73M717.5 1029.77V1119.31M718.5 1037.84V1106.09M719.5 1035.18V1117.63M720.5 1035.37V1130.04M721.5 1016.82V1117.29M722.5 1039.48V1111.72M723.5 1039.8V1106.48M724.5 1026.79V1114.3M725.5 1036.79V1128.35M726.5 1024.81V1111.9M727.5 1026.58V1112.77M728.5 1018.07V1111.08M729.5 1038.62V1124.96M730.5 1021.2V1112.39M731.5 1026.79V1121.21M732.5 1026.14V1121.01M733.5 1035.42V1138.17M734.5 1019.8V1125.03M735.5 1004.59V1128.5M736.5 1032.84V1118.27M737.5 1042.17V1103.04M738.5 1037.54V1124.27M739.5 1026.89V1098.24M740.5 1014.72V1105.88M741.5 1009.24V1105.55M742.5 1033.22V1119.98M743.5 1038.59V1113.75M744.5 1037.96V1103.4M745.5 1023.15V1107.54M746.5 1010.81V1115.46M747.5 1024.97V1118.5M748.5 1039.49V1108.63M749.5 1021.15V1095.38M750.5 1021.43V1116.7M751.5 1038.49V1107.9M752.5 1040.26V1125.26M753.5 1007.68V1104.42M754.5 1044.15V1118.98M755.5 1019.72V1104.94M756.5 1025.7V1126.39M757.5 1047.21V1114.05M758.5 1027.45V1107.69M759.5 1046.9V1101.5M760.5 1036.41V1108.4M761.5 1045.41V1115.42M762.5 1044.22V1125.89M763.5 1050.51V1095.46M764.5 1044.93V1100.51M765.5 1040V1084.51M766.5 1057.99V1108.31M767.5 1042.37V1113.3M768.5 1040.38V1123.71M769.5 1030.15V1120.86M770.5 1023.49V1123.2M771.5 1030.77V1095.69M772.5 1030.59V1157.9M773.5 996.6V1107.38M774.5 1017.92V1134.08M775.5 1012.27V1120.37M776.5 1016.44V1136.91M777.5 1009.97V1110.68M778.5 1011.33V1144.88M779.5 1021.18V1150.06M780.5 1023.93V1165.96M781.5 1023.97V1103.98M782.5 1022.32V1114.35M783.5 1024.44V1119.98M784.5 994.53V1101.52M785.5 1018.39V1118.55M786.5 1014.21V1137.9M787.5 1034.36V1101.06M788.5 1009.57V1127.72M789.5 1035.56V1129.9M790.5 1031.95V1121.65M791.5 1030.49V1112.1M792.5 1045.87V1109.08M793.5 1009.21V1111.68M794.5 1021.76V1104.12M795.5 1009.54V1136.22M796.5 1025.12V1120.91M797.5 1024.44V1114.56M798.5 1029.99V1105.16M799.5 984.73V1153.97M800.5 1031.72V1161.92M801.5 1025.38V1114.04M802.5 1029.86V1131.29M803.5 1018.85V1146.66M804.5 999.94V1108.22M805.5 1012.91V1117.42M806.5 1022.01V1110.59M807.5 1017.21V1121.01M808.5 1028.75V1132.18M809.5 1023.79V1142.94M810.5 999.13V1128.27M811.5 1027.85V1138.16M812.5 1014.85V1130.91M813.5 1002.25V1119.21M814.5 996.37V1115.24M815.5 1009.35V1112.36M816.5 1011.47V1105.37M817.5 1012.29V1142.41M818.5 996.61V1131M819.5 1024.74V1143.33M820.5 1024.55V1120.09M821.5 995.43V1137.07M822.5 1019.98V1127.35M823.5 1013.33V1125.06M824.5 1017.08V1131.93M825.5 1014.63V1137.58M826.5 1008.11V1137.4M827.5 1018.85V1132.56M828.5 1012.35V1143.04M829.5 1001.34V1127.5M830.5 1022.01V1129.18M831.5 1021.88V1123.35M832.5 985.81V1125.09M833.5 1033.33V1116.96M834.5 1033.9V1156.11M835.5 1022.2V1126.33M836.5 1016.49V1118.52M837.5 1029.71V1114.45M838.5 1034.66V1106.24M839.5 1018.7V1103.18M840.5 1035.31V1099.51M841.5 1008.94V1122.37M842.5 1032.79V1112.04M843.5 1022.02V1112.04M844.5 1009.01V1095.72M845.5 1043.52V1128.62M846.5 1025.28V1111.66M847.5 1040.81V1107.83M848.5 1033.41V1096.43M849.5 1013.85V1115.41M850.5 1038.75V1098.52M851.5 1030.66V1121.38M852.5 1014.27V1114.56M853.5 1032.76V1107.99M854.5 1034.41V1103.16M855.5 1026.56V1111.7M856.5 1028.18V1105.43M857.5 1044.98V1122.21M858.5 1003.78V1107.26M859.5 1039.38V1113.43M860.5 1025.89V1120.67M861.5 1024.31V1130.71M862.5 1025.43V1106.65M863.5 1043.22V1130.15M864.5 1012.45V1115.63M865.5 1017.67V1102.08M866.5 1040.73V1115.02M867.5 1048.83V1111.45M868.5 1033.06V1125.23M869.5 1029V1109.71M870.5 1018.1V1092.88M871.5 1023.89V1120.22M872.5 1023.08V1111.91M873.5 1023.51V1109.05M874.5 1028.54V1106.59M875.5 1022.6V1125.7M876.5 1015.64V1100.34M877.5 1012.96V1120.27M878.5 1020.38V1095.75M879.5 1047.16V1101.89M880.5 1017.03V1121.76M881.5 1031.83V1112.79M882.5 1047.59V1104.98M883.5 1040.05V1116.48M884.5 1017.17V1108.43M885.5 1045.17V1119.91M886.5 1034.11V1105M887.5 1022.21V1118.33M888.5 1037.73V1107.21M889.5 1023.91V1115.23M890.5 1018.21V1121.32M891.5 1039.52V1098.06M892.5 1042.47V1114.8M893.5 1037.54V1114.22M894.5 1032.13V1103.13M895.5 1011.52V1108.83M896.5 1011.37V1104.36M897.5 1003.73V1125.6M898.5 1001.7V1105.77M899.5 1028.08V1119.84M900.5 1010.22V1117.74M901.5 1032.79V1116.78M902.5 1011.38V1125.54M903.5 1018.95V1118.3M904.5 1019.33V1124.46M905.5 1022.61V1107.47M906.5 1029.8V1129.01M907.5 995.05V1127.89M908.5 1034.08V1126.13M909.5 983.06V1125.52M910.5 1019.02V1113.47M911.5 1013.48V1159.81M912.5 992.39V1137.1M913.5 997.67V1135.9M914.5 1018.87V1150.05M915.5 1010.48V1113.72M916.5 1005.05V1127.05M917.5 1016.77V1123.2M918.5 1025.97V1118.3M919.5 1021.82V1132.43M920.5 1027.99V1113.43M921.5 995.91V1130.5M922.5 1017.61V1113.69M923.5 1009.06V1111.75M924.5 1015.88V1135.31M925.5 1025.18V1140.98M926.5 1033.09V1122.99M927.5 1012.65V1125.58M928.5 1028.91V1138.35M929.5 1032.69V1129.51M930.5 1019.08V1134.94M931.5 1018.54V1138.38M932.5 1035.37V1121.04M933.5 1024.53V1111.93M934.5 1038.94V1113.58M935.5 978.05V1119.77M936.5 1008.33V1123.79M937.5 1032.88V1114.58M938.5 1030.95V1119.98M939.5 1007.61V1132.66M940.5 1024.75V1124.63M941.5 1011.12V1113.29M942.5 1019.05V1141.1M943.5 1016.91V1129.71M944.5 1021.45V1143.16M945.5 1029.02V1109.37M946.5 1015.52V1111.94M947.5 1041.29V1132.44M948.5 999.7V1126.92M949.5 997.75V1112.46M950.5 1025.67V1156.91M951.5 1009.76V1143.06M952.5 1020.16V1147.21M953.5 993.24V1101.88M954.5 1004.09V1131.74M955.5 1034.57V1124.6M956.5 1014.71V1168.33M957.5 1009.75V1141.58" stroke="#de351f" stroke-width="1" fill="none"/>
<path d="M1171.7 1000.4 L1177 998 L1181.6 1000.4 L1186.3 996.3 L1195.6 994.2 L1211.9 995.4 L1217.7 998.6 L1227.1 998 L1232.3 1001.9 L1236.4 997.5 L1246.9 995.1 L1260.8 996.3 L1266.7 998.6 L1278.3 999.8 L1284.1 996.9 L1287.6 998.6 L1291.1 995.7 L1302.8 994.6 L1307.4 998 L1312.1 994.2 L1319.1 1000.4 L1328.4 997.5 L1337.7 995.1 L1347 994.6 L1354 997.7 L1358.7 995.1 L1365.6 998.6 L1377.3 998 L1385.4 996.3 L1399.4 997.5 L1404.1 994.6 L1432 995.1 L1442.5 1005 L1446 1002.1 L1453 1002.1 L1457.6 996.9 L1470 996.3 L1477 997.5 L1481.6 1005 L1486.3 1002.7 L1490.4 1004.5 L1494.5 997.5 L1500.3 996.1 L1511.9 994.9 L1524.7 994.9 L1527.1 997.5 L1531.7 996.3 L1535.8 1004.5 L1539.9 999.8 L1544.5 1004.5 L1549.2 996.9 L1553.8 994.9 L1563.2 996.3 L1576 994.6 L1579.5 1004.5 L1586.5 1007.4 L1598.1 995.1 L1621.4 994.9 L1628.4 999.8 L1630.7 998.6 L1635.4 1006.2 L1641.2 1008.5 L1649.3 998.6 L1657.5 995.1 L1663.3 998.6 L1673.8 999.2 L1683.1 1016.7 L1693.6 1002.7 L1699.4 998 L1705.2 1001.6 L1713.9 996.1 L1720.4 1005.9 L1726.2 1036.4 L1729.9 1037.1 L1732 1033.5 L1732.5 1011 L1733 1119 L1733.5 1118.3 L1748 1118 L1750 1118.3 L2074.1 1118.5" stroke="#2cc0cc" stroke-width="2.5" fill="none" stroke-linejoin="round" />
<path d="M2289.5 1073.5 L3201.07 1073.5" stroke="#80c080" stroke-width="2" fill="none" stroke-linejoin="round" />
<path d="M123.5 66V304.5M318.5 66V304.5M513.5 66V304.5M707.5 66V304.5M902.5 66V304.5M1097.5 66V304.5" stroke="#fff" stroke-opacity="0.11" stroke-width="1" fill="none"/>
<path d="M188.5 66V304.5M253.5 66V304.5M383.5 66V304.5M448.5 66V304.5M578.5 66V304.5M642.5 66V304.5M772.5 66V304.5M837.5 66V304.5M967.5 66V304.5M1032.5 66V304.5" stroke="#fff" stroke-opacity="0.063" stroke-width="1" fill="none"/>
<path d="M72.5 288.5H1112M72.5 247.5H1112M72.5 205.5H1112M72.5 164.5H1112M72.5 122.5H1112M72.5 80.5H1112" stroke="#fff" stroke-opacity="0.078" stroke-width="1" fill="none"/>
<path d="M1211.5 66V304.5M1412.5 66V304.5M1612.5 66V304.5M1813.5 66V304.5M2013.5 66V304.5M2214.5 66V304.5" stroke="#fff" stroke-opacity="0.11" stroke-width="1" fill="none"/>
<path d="M1278.5 66V304.5M1345.5 66V304.5M1478.5 66V304.5M1545.5 66V304.5M1679.5 66V304.5M1746.5 66V304.5M1880.5 66V304.5M1947.5 66V304.5M2080.5 66V304.5M2147.5 66V304.5" stroke="#fff" stroke-opacity="0.063" stroke-width="1" fill="none"/>
<path d="M1159.5 288.5H2230M1159.5 219.5H2230M1159.5 150.5H2230M1159.5 80.5H2230" stroke="#fff" stroke-opacity="0.078" stroke-width="1" fill="none"/>
<path d="M2341.5 66V304.5M2542.5 66V304.5M2742.5 66V304.5M2943.5 66V304.5M3143.5 66V304.5M3344.5 66V304.5" stroke="#fff" stroke-opacity="0.11" stroke-width="1" fill="none"/>
<path d="M2408.5 66V304.5M2475.5 66V304.5M2608.5 66V304.5M2675.5 66V304.5M2809.5 66V304.5M2876.5 66V304.5M3010.5 66V304.5M3077.5 66V304.5M3210.5 66V304.5M3277.5 66V304.5" stroke="#fff" stroke-opacity="0.063" stroke-width="1" fill="none"/>
<path d="M2289.5 287.5H3360M2289.5 256.5H3360M2289.5 225.5H3360M2289.5 194.5H3360M2289.5 163.5H3360M2289.5 132.5H3360M2289.5 101.5H3360M2289.5 70.5H3360" stroke="#fff" stroke-opacity="0.078" stroke-width="1" fill="none"/>
<path d="M123.5 362V600.5M318.5 362V600.5M513.5 362V600.5M707.5 362V600.5M902.5 362V600.5M1097.5 362V600.5" stroke="#fff" stroke-opacity="0.11" stroke-width="1" fill="none"/>
<path d="M188.5 362V600.5M253.5 362V600.5M383.5 362V600.5M448.5 362V600.5M578.5 362V600.5M642.5 362V600.5M772.5 362V600.5M837.5 362V600.5M967.5 362V600.5M1032.5 362V600.5" stroke="#fff" stroke-opacity="0.063" stroke-width="1" fill="none"/>
<path d="M72.5 586.5H1112M72.5 544.5H1112M72.5 502.5H1112M72.5 460.5H1112M72.5 418.5H1112M72.5 376.5H1112" stroke="#fff" stroke-opacity="0.078" stroke-width="1" fill="none"/>
<path d="M1223.5 362V600.5M1421.5 362V600.5M1619.5 362V600.5M1818.5 362V600.5M2016.5 362V600.5M2214.5 362V600.5" stroke="#fff" stroke-opacity="0.11" stroke-width="1" fill="none"/>
<path d="M1289.5 362V600.5M1355.5 362V600.5M1487.5 362V600.5M1553.5 362V600.5M1685.5 362V600.5M1752.5 362V600.5M1884.5 362V600.5M1950.5 362V600.5M2082.5 362V600.5M2148.5 362V600.5" stroke="#fff" stroke-opacity="0.063" stroke-width="1" fill="none"/>
<path d="M1171.5 586.5H2230M1171.5 544.5H2230M1171.5 502.5H2230M1171.5 460.5H2230M1171.5 418.5H2230M1171.5 376.5H2230" stroke="#fff" stroke-opacity="0.078" stroke-width="1" fill="none"/>
<path d="M2336.5 362V600.5M2538.5 362V600.5M2739.5 362V600.5M2941.5 362V600.5M3142.5 362V600.5M3344.5 362V600.5" stroke="#fff" stroke-opacity="0.11" stroke-width="1" fill="none"/>
<path d="M2403.5 362V600.5M2470.5 362V600.5M2605.5 362V600.5M2672.5 362V600.5M2806.5 362V600.5M2874.5 362V600.5M3008.5 362V600.5M3075.5 362V600.5M3210.5 362V600.5M3277.5 362V600.5" stroke="#fff" stroke-opacity="0.063" stroke-width="1" fill="none"/>
<path d="M2284.5 586.5H3360M2284.5 544.5H3360M2284.5 502.5H3360M2284.5 460.5H3360M2284.5 418.5H3360M2284.5 376.5H3360" stroke="#fff" stroke-opacity="0.078" stroke-width="1" fill="none"/>
<path d="M123.5 658V896.5M318.5 658V896.5M513.5 658V896.5M707.5 658V896.5M902.5 658V896.5M1097.5 658V896.5" stroke="#fff" stroke-opacity="0.11" stroke-width="1" fill="none"/>
<path d="M188.5 658V896.5M253.5 658V896.5M383.5 658V896.5M448.5 658V896.5M578.5 658V896.5M642.5 658V896.5M772.5 658V896.5M837.5 658V896.5M967.5 658V896.5M1032.5 658V896.5" stroke="#fff" stroke-opacity="0.063" stroke-width="1" fill="none"/>
<path d="M60.5 881.5H1112M60.5 829.5H1112M60.5 777.5H1112M60.5 725.5H1112M60.5 673.5H1112" stroke="#fff" stroke-opacity="0.078" stroke-width="1" fill="none"/>
<path d="M1226.5 658V896.5M1424.5 658V896.5M1621.5 658V896.5M1819.5 658V896.5M2016.5 658V896.5M2214.5 658V896.5" stroke="#fff" stroke-opacity="0.11" stroke-width="1" fill="none"/>
<path d="M1292.5 658V896.5M1358.5 658V896.5M1489.5 658V896.5M1555.5 658V896.5M1687.5 658V896.5M1753.5 658V896.5M1885.5 658V896.5M1951.5 658V896.5M2082.5 658V896.5M2148.5 658V896.5" stroke="#fff" stroke-opacity="0.063" stroke-width="1" fill="none"/>
<path d="M1175.5 870.5H2230M1175.5 758.5H2230" stroke="#fff" stroke-opacity="0.078" stroke-width="1" fill="none"/>
<path d="M2345.5 658V896.5M2545.5 658V896.5M2745.5 658V896.5M2944.5 658V896.5M3144.5 658V896.5M3344.5 658V896.5" stroke="#fff" stroke-opacity="0.11" stroke-width="1" fill="none"/>
<path d="M2412.5 658V896.5M2478.5 658V896.5M2611.5 658V896.5M2678.5 658V896.5M2811.5 658V896.5M2878.5 658V896.5M3011.5 658V896.5M3078.5 658V896.5M3211.5 658V896.5M3277.5 658V896.5" stroke="#fff" stroke-opacity="0.063" stroke-width="1" fill="none"/>
<path d="M2293.5 885.5H3360M2293.5 850.5H3360M2293.5 815.5H3360M2293.5 779.5H3360M2293.5 744.5H3360M2293.5 709.5H3360M2293.5 674.5H3360" stroke="#fff" stroke-opacity="0.078" stroke-width="1" fill="none"/>
<path d="M123.5 954V1193.5M318.5 954V1193.5M513.5 954V1193.5M707.5 954V1193.5M902.5 954V1193.5M1097.5 954V1193.5" stroke="#fff" stroke-opacity="0.11" stroke-width="1" fill="none"/>
<path d="M188.5 954V1193.5M253.5 954V1193.5M383.5 954V1193.5M448.5 954V1193.5M578.5 954V1193.5M642.5 954V1193.5M772.5 954V1193.5M837.5 954V1193.5M967.5 954V1193.5M1032.5 954V1193.5" stroke="#fff" stroke-opacity="0.063" stroke-width="1" fill="none"/>
<path d="M68.5 1137.5H1112M68.5 1071.5H1112M68.5 1004.5H1112" stroke="#fff" stroke-opacity="0.078" stroke-width="1" fill="none"/>
<path d="M1223.5 954V1193.5M1421.5 954V1193.5M1619.5 954V1193.5M1818.5 954V1193.5M2016.5 954V1193.5M2214.5 954V1193.5" stroke="#fff" stroke-opacity="0.11" stroke-width="1" fill="none"/>
<path d="M1289.5 954V1193.5M1355.5 954V1193.5M1487.5 954V1193.5M1553.5 954V1193.5M1685.5 954V1193.5M1752.5 954V1193.5M1884.5 954V1193.5M1950.5 954V1193.5M2082.5 954V1193.5M2148.5 954V1193.5" stroke="#fff" stroke-opacity="0.063" stroke-width="1" fill="none"/>
<path d="M1171.5 1118.5H2230M1171.5 1038.5H2230M1171.5 958.5H2230" stroke="#fff" stroke-opacity="0.078" stroke-width="1" fill="none"/>
<path d="M2341.5 954V1193.5M2542.5 954V1193.5M2742.5 954V1193.5M2943.5 954V1193.5M3143.5 954V1193.5M3344.5 954V1193.5" stroke="#fff" stroke-opacity="0.11" stroke-width="1" fill="none"/>
<path d="M2408.5 954V1193.5M2475.5 954V1193.5M2608.5 954V1193.5M2675.5 954V1193.5M2809.5 954V1193.5M2876.5 954V1193.5M3010.5 954V1193.5M3077.5 954V1193.5M3210.5 954V1193.5M3277.5 954V1193.5" stroke="#fff" stroke-opacity="0.063" stroke-width="1" fill="none"/>
<path d="M2289.5 1157.5H3360M2289.5 1115.5H3360M2289.5 1073.5H3360M2289.5 1031.5H3360M2289.5 989.5H3360" stroke="#fff" stroke-opacity="0.078" stroke-width="1" fill="none"/>
<path d="M72.5 66V304.5H1112" stroke="#aaaaaa" stroke-width="1" fill="none"/>
<text x="467.8" y="56.2" font-size="13.4" fill="#e6e6e6" textLength="248.9" lengthAdjust="spacingAndGlyphs" style="stroke-width:0.1px">H1:SYS-PROTECTION_AS_ERROR_FLAG</text>
<text transform="translate(35 186.75) rotate(-90)" font-size="14.5" fill="#e6e6e6" text-anchor="middle">counts</text>
<g clip-path="url(#t00)">
<text x="67" y="294" font-size="14" fill="#e6e6e6" text-anchor="end">0</text>
<text x="67" y="252.4" font-size="14" fill="#e6e6e6" text-anchor="end">0.2</text>
<text x="67" y="210.8" font-size="14" fill="#e6e6e6" text-anchor="end">0.4</text>
<text x="67" y="169.2" font-size="14" fill="#e6e6e6" text-anchor="end">0.6</text>
<text x="67" y="127.6" font-size="14" fill="#e6e6e6" text-anchor="end">0.8</text>
<text x="67" y="86" font-size="14" fill="#e6e6e6" text-anchor="end">1</text>
</g>
<g font-size="14.2" fill="#e6e6e6" text-anchor="middle" clip-path="url(#l00)">
<text x="123.5" y="321.5">-1h,5m,30s</text>
<text x="318.3" y="321.5">-1h,5m</text>
<text x="513.1" y="321.5">-1h,4m,30s</text>
<text x="707.9" y="321.5">-1h,4m</text>
<text x="902.7" y="321.5">-1h,3m,30s</text>
<text x="1097.5" y="321.5">-1h,3m</text>
</g>
<path d="M1159.5 66V304.5H2230" stroke="#aaaaaa" stroke-width="1" fill="none"/>
<text x="1568.05" y="56.2" font-size="13.4" fill="#e6e6e6" textLength="253.4" lengthAdjust="spacingAndGlyphs" style="stroke-width:0.1px">H1:SYS-PROTECTION_AS_ERROR_CODE</text>
<text transform="translate(1133.7 186.75) rotate(-90)" font-size="14.5" fill="#e6e6e6" text-anchor="middle">counts</text>
<g clip-path="url(#t01)">
<text x="1154" y="294" font-size="14" fill="#e6e6e6" text-anchor="end">0</text>
<text x="1154" y="224.67" font-size="14" fill="#e6e6e6" text-anchor="end">2</text>
<text x="1154" y="155.33" font-size="14" fill="#e6e6e6" text-anchor="end">4</text>
<text x="1154" y="86" font-size="14" fill="#e6e6e6" text-anchor="end">6</text>
</g>
<g font-size="14.2" fill="#e6e6e6" text-anchor="middle" clip-path="url(#l01)">
<text x="1211.5" y="321.5">-1h,5m,30s</text>
<text x="1412.1" y="321.5">-1h,5m</text>
<text x="1612.7" y="321.5">-1h,4m,30s</text>
<text x="1813.3" y="321.5">-1h,4m</text>
<text x="2013.9" y="321.5">-1h,3m,30s</text>
<text x="2214.5" y="321.5">-1h,3m</text>
</g>
<path d="M2289.5 66V304.5H3360" stroke="#aaaaaa" stroke-width="1" fill="none"/>
<text x="2684.9" y="56.2" font-size="13.4" fill="#e6e6e6" textLength="279.7" lengthAdjust="spacingAndGlyphs" style="stroke-width:0.1px">H1:SYS-MOTION_C_FASTSHUTTER_A_STATE</text>
<text transform="translate(2251.5 186.75) rotate(-90)" font-size="14.5" fill="#e6e6e6" text-anchor="middle">counts</text>
<g clip-path="url(#t02)">
<text x="2284" y="292.2" font-size="14" fill="#e6e6e6" text-anchor="end">-0.2</text>
<text x="2284" y="261.24" font-size="14" fill="#e6e6e6" text-anchor="end">0</text>
<text x="2284" y="230.29" font-size="14" fill="#e6e6e6" text-anchor="end">0.2</text>
<text x="2284" y="199.33" font-size="14" fill="#e6e6e6" text-anchor="end">0.4</text>
<text x="2284" y="168.37" font-size="14" fill="#e6e6e6" text-anchor="end">0.6</text>
<text x="2284" y="137.41" font-size="14" fill="#e6e6e6" text-anchor="end">0.8</text>
<text x="2284" y="106.46" font-size="14" fill="#e6e6e6" text-anchor="end">1</text>
<text x="2284" y="75.5" font-size="14" fill="#e6e6e6" text-anchor="end">1.2</text>
</g>
<g font-size="14.2" fill="#e6e6e6" text-anchor="middle" clip-path="url(#l02)">
<text x="2341.5" y="321.5">-1h,5m,30s</text>
<text x="2542.1" y="321.5">-1h,5m</text>
<text x="2742.7" y="321.5">-1h,4m,30s</text>
<text x="2943.3" y="321.5">-1h,4m</text>
<text x="3143.9" y="321.5">-1h,3m,30s</text>
<text x="3344.5" y="321.5">-1h,3m</text>
</g>
<path d="M72.5 362V600.5H1112" stroke="#aaaaaa" stroke-width="1" fill="none"/>
<text x="447.85" y="352.2" font-size="13.4" fill="#e6e6e6" textLength="288.8" lengthAdjust="spacingAndGlyphs" style="stroke-width:0.1px">H1:SYS-PROTECTION_AS_POWERINTERLOCK</text>
<text transform="translate(35 482.75) rotate(-90)" font-size="14.5" fill="#e6e6e6" text-anchor="middle">counts</text>
<g clip-path="url(#t10)">
<text x="67" y="591" font-size="14" fill="#e6e6e6" text-anchor="end">0</text>
<text x="67" y="549.2" font-size="14" fill="#e6e6e6" text-anchor="end">0.2</text>
<text x="67" y="507.4" font-size="14" fill="#e6e6e6" text-anchor="end">0.4</text>
<text x="67" y="465.6" font-size="14" fill="#e6e6e6" text-anchor="end">0.6</text>
<text x="67" y="423.8" font-size="14" fill="#e6e6e6" text-anchor="end">0.8</text>
<text x="67" y="382" font-size="14" fill="#e6e6e6" text-anchor="end">1</text>
</g>
<g font-size="14.2" fill="#e6e6e6" text-anchor="middle" clip-path="url(#l10)">
<text x="123.5" y="617.5">-1h,5m,30s</text>
<text x="318.3" y="617.5">-1h,5m</text>
<text x="513.1" y="617.5">-1h,4m,30s</text>
<text x="707.9" y="617.5">-1h,4m</text>
<text x="902.7" y="617.5">-1h,3m,30s</text>
<text x="1097.5" y="617.5">-1h,3m</text>
</g>
<path d="M1171.5 362V600.5H2230" stroke="#aaaaaa" stroke-width="1" fill="none"/>
<text x="1575.85" y="352.2" font-size="13.4" fill="#e6e6e6" textLength="249.8" lengthAdjust="spacingAndGlyphs" style="stroke-width:0.1px">H1:SYS-PROTECTION_AS_TESTNEEDED</text>
<text transform="translate(1133.7 482.75) rotate(-90)" font-size="14.5" fill="#e6e6e6" text-anchor="middle">counts</text>
<g clip-path="url(#t11)">
<text x="1166" y="591" font-size="14" fill="#e6e6e6" text-anchor="end">0</text>
<text x="1166" y="549.2" font-size="14" fill="#e6e6e6" text-anchor="end">0.2</text>
<text x="1166" y="507.4" font-size="14" fill="#e6e6e6" text-anchor="end">0.4</text>
<text x="1166" y="465.6" font-size="14" fill="#e6e6e6" text-anchor="end">0.6</text>
<text x="1166" y="423.8" font-size="14" fill="#e6e6e6" text-anchor="end">0.8</text>
<text x="1166" y="382" font-size="14" fill="#e6e6e6" text-anchor="end">1</text>
</g>
<g font-size="14.2" fill="#e6e6e6" text-anchor="middle" clip-path="url(#l11)">
<text x="1223.5" y="617.5">-1h,5m,30s</text>
<text x="1421.7" y="617.5">-1h,5m</text>
<text x="1619.9" y="617.5">-1h,4m,30s</text>
<text x="1818.1" y="617.5">-1h,4m</text>
<text x="2016.3" y="617.5">-1h,3m,30s</text>
<text x="2214.5" y="617.5">-1h,3m</text>
</g>
<path d="M2284.5 362V600.5H3360" stroke="#aaaaaa" stroke-width="1" fill="none"/>
<text x="2715.65" y="352.2" font-size="13.4" fill="#e6e6e6" textLength="213.2" lengthAdjust="spacingAndGlyphs" style="stroke-width:0.1px">H1:SYS-PROTECTION_AS_STATUS</text>
<text transform="translate(2251.5 482.75) rotate(-90)" font-size="14.5" fill="#e6e6e6" text-anchor="middle">counts</text>
<g clip-path="url(#t12)">
<text x="2279" y="591" font-size="14" fill="#e6e6e6" text-anchor="end">0</text>
<text x="2279" y="549.2" font-size="14" fill="#e6e6e6" text-anchor="end">0.2</text>
<text x="2279" y="507.4" font-size="14" fill="#e6e6e6" text-anchor="end">0.4</text>
<text x="2279" y="465.6" font-size="14" fill="#e6e6e6" text-anchor="end">0.6</text>
<text x="2279" y="423.8" font-size="14" fill="#e6e6e6" text-anchor="end">0.8</text>
<text x="2279" y="382" font-size="14" fill="#e6e6e6" text-anchor="end">1</text>
</g>
<g font-size="14.2" fill="#e6e6e6" text-anchor="middle" clip-path="url(#l12)">
<text x="2336.5" y="617.5">-1h,5m,30s</text>
<text x="2538.1" y="617.5">-1h,5m</text>
<text x="2739.7" y="617.5">-1h,4m,30s</text>
<text x="2941.3" y="617.5">-1h,4m</text>
<text x="3142.9" y="617.5">-1h,3m,30s</text>
<text x="3344.5" y="617.5">-1h,3m</text>
</g>
<path d="M60.5 658V896.5H1112" stroke="#aaaaaa" stroke-width="1" fill="none"/>
<text x="467.3" y="648.2" font-size="13.4" fill="#e6e6e6" textLength="237.9" lengthAdjust="spacingAndGlyphs" style="stroke-width:0.1px">H1:SYS-PROTECTION_AS_FAULTTYPE</text>
<text transform="translate(35 778.75) rotate(-90)" font-size="14.5" fill="#e6e6e6" text-anchor="middle">counts</text>
<g clip-path="url(#t20)">
<text x="55" y="886.5" font-size="14" fill="#e6e6e6" text-anchor="end">-2</text>
<text x="55" y="834.5" font-size="14" fill="#e6e6e6" text-anchor="end">-1</text>
<text x="55" y="782.5" font-size="14" fill="#e6e6e6" text-anchor="end">0</text>
<text x="55" y="730.5" font-size="14" fill="#e6e6e6" text-anchor="end">1</text>
<text x="55" y="678.5" font-size="14" fill="#e6e6e6" text-anchor="end">2</text>
</g>
<g font-size="14.2" fill="#e6e6e6" text-anchor="middle" clip-path="url(#l20)">
<text x="123.5" y="913.5">-1h,5m,30s</text>
<text x="318.3" y="913.5">-1h,5m</text>
<text x="513.1" y="913.5">-1h,4m,30s</text>
<text x="707.9" y="913.5">-1h,4m</text>
<text x="902.7" y="913.5">-1h,3m,30s</text>
<text x="1097.5" y="913.5">-1h,3m</text>
</g>
<path d="M1175.5 658V896.5H2230" stroke="#aaaaaa" stroke-width="1" fill="none"/>
<text x="1540.6" y="648.2" font-size="13.4" fill="#e6e6e6" textLength="324.3" lengthAdjust="spacingAndGlyphs" style="stroke-width:0.1px">H1:SYS-MOTION_C_SHUTTER_G_TRIGGER_POWER</text>
<text transform="translate(1133.7 778.75) rotate(-90)" font-size="14.5" fill="#e6e6e6" text-anchor="middle">counts</text>
<g clip-path="url(#t21)">
<text x="1170" y="875.6" font-size="14" fill="#e6e6e6" text-anchor="end">0</text>
<text x="1170" y="763.4" font-size="14" fill="#e6e6e6" text-anchor="end">0.01</text>
</g>
<g font-size="14.2" fill="#e6e6e6" text-anchor="middle" clip-path="url(#l21)">
<text x="1226.5" y="913.5">-1h,5m,30s</text>
<text x="1424.1" y="913.5">-1h,5m</text>
<text x="1621.7" y="913.5">-1h,4m,30s</text>
<text x="1819.3" y="913.5">-1h,4m</text>
<text x="2016.9" y="913.5">-1h,3m,30s</text>
<text x="2214.5" y="913.5">-1h,3m</text>
</g>
<path d="M2293.5 658V896.5H3360" stroke="#aaaaaa" stroke-width="1" fill="none"/>
<text x="2736.9" y="648.2" font-size="13.4" fill="#e6e6e6" textLength="179.7" lengthAdjust="spacingAndGlyphs" style="stroke-width:0.1px">H1:GRD-ISC_LOCK_STATE_N</text>
<text transform="translate(2251.5 778.75) rotate(-90)" font-size="14.5" fill="#e6e6e6" text-anchor="middle">counts</text>
<g clip-path="url(#t22)">
<text x="2288" y="890.5" font-size="14" fill="#e6e6e6" text-anchor="end">0</text>
<text x="2288" y="855.28" font-size="14" fill="#e6e6e6" text-anchor="end">20</text>
<text x="2288" y="820.07" font-size="14" fill="#e6e6e6" text-anchor="end">40</text>
<text x="2288" y="784.85" font-size="14" fill="#e6e6e6" text-anchor="end">60</text>
<text x="2288" y="749.63" font-size="14" fill="#e6e6e6" text-anchor="end">80</text>
<text x="2288" y="714.42" font-size="14" fill="#e6e6e6" text-anchor="end">100</text>
<text x="2288" y="679.2" font-size="14" fill="#e6e6e6" text-anchor="end">120</text>
</g>
<g font-size="14.2" fill="#e6e6e6" text-anchor="middle" clip-path="url(#l22)">
<text x="2345.5" y="913.5">-1h,5m,30s</text>
<text x="2545.3" y="913.5">-1h,5m</text>
<text x="2745.1" y="913.5">-1h,4m,30s</text>
<text x="2944.9" y="913.5">-1h,4m</text>
<text x="3144.7" y="913.5">-1h,3m,30s</text>
<text x="3344.5" y="913.5">-1h,3m</text>
</g>
<path d="M68.5 954V1193.5H1112" stroke="#aaaaaa" stroke-width="1" fill="none"/>
<text x="477.55" y="944.2" font-size="13.4" fill="#e6e6e6" textLength="225.4" lengthAdjust="spacingAndGlyphs" style="stroke-width:0.1px">H1:ISI-HAM6_GS13INF_V3_IN1_DQ</text>
<text transform="translate(35 1075.25) rotate(-90)" font-size="14.5" fill="#e6e6e6" text-anchor="middle">counts</text>
<g clip-path="url(#t30)">
<text x="63" y="1142.8" font-size="14" fill="#e6e6e6" text-anchor="end">-10</text>
<text x="63" y="1076.15" font-size="14" fill="#e6e6e6" text-anchor="end">0</text>
<text x="63" y="1009.5" font-size="14" fill="#e6e6e6" text-anchor="end">10</text>
</g>
<g font-size="14.2" fill="#e6e6e6" text-anchor="middle" clip-path="url(#l30)">
<text x="123.5" y="1210.5">-1h,5m,30s</text>
<text x="318.3" y="1210.5">-1h,5m</text>
<text x="513.1" y="1210.5">-1h,4m,30s</text>
<text x="707.9" y="1210.5">-1h,4m</text>
<text x="902.7" y="1210.5">-1h,3m,30s</text>
<text x="1097.5" y="1210.5">-1h,3m</text>
</g>
<path d="M1171.5 954V1193.5H2230" stroke="#aaaaaa" stroke-width="1" fill="none"/>
<text x="1589.4" y="944.2" font-size="13.4" fill="#e6e6e6" textLength="222.7" lengthAdjust="spacingAndGlyphs" style="stroke-width:0.1px">H1:LSC-POPAIR_B_RF18_I_ERR_DQ</text>
<text transform="translate(1133.7 1075.25) rotate(-90)" font-size="14.5" fill="#e6e6e6" text-anchor="middle">counts</text>
<g clip-path="url(#t31)">
<text x="1166" y="1123.5" font-size="14" fill="#e6e6e6" text-anchor="end">0</text>
<text x="1166" y="1043.4" font-size="14" fill="#e6e6e6" text-anchor="end">100</text>
<text x="1166" y="963.3" font-size="14" fill="#e6e6e6" text-anchor="end">200</text>
</g>
<g font-size="14.2" fill="#e6e6e6" text-anchor="middle" clip-path="url(#l31)">
<text x="1223.5" y="1210.5">-1h,5m,30s</text>
<text x="1421.7" y="1210.5">-1h,5m</text>
<text x="1619.9" y="1210.5">-1h,4m,30s</text>
<text x="1818.1" y="1210.5">-1h,4m</text>
<text x="2016.3" y="1210.5">-1h,3m,30s</text>
<text x="2214.5" y="1210.5">-1h,3m</text>
</g>
<path d="M2289.5 954V1193.5H3360" stroke="#aaaaaa" stroke-width="1" fill="none"/>
<text x="2683.25" y="944.2" font-size="13.4" fill="#e6e6e6" textLength="283" lengthAdjust="spacingAndGlyphs" style="stroke-width:0.1px">H1:SYS-MOTION_C_FASTSHUTTER_A_MODE</text>
<text transform="translate(2251.5 1075.25) rotate(-90)" font-size="14.5" fill="#e6e6e6" text-anchor="middle">counts</text>
<g clip-path="url(#t32)">
<text x="2284" y="1162.5" font-size="14" fill="#e6e6e6" text-anchor="end">-0.4</text>
<text x="2284" y="1120.5" font-size="14" fill="#e6e6e6" text-anchor="end">-0.2</text>
<text x="2284" y="1078.5" font-size="14" fill="#e6e6e6" text-anchor="end">0</text>
<text x="2284" y="1036.5" font-size="14" fill="#e6e6e6" text-anchor="end">0.2</text>
<text x="2284" y="994.5" font-size="14" fill="#e6e6e6" text-anchor="end">0.4</text>
</g>
<g font-size="14.2" fill="#e6e6e6" text-anchor="middle" clip-path="url(#l32)">
<text x="2341.5" y="1210.5">-1h,5m,30s</text>
<text x="2542.1" y="1210.5">-1h,5m</text>
<text x="2742.7" y="1210.5">-1h,4m,30s</text>
<text x="2943.3" y="1210.5">-1h,4m</text>
<text x="3143.9" y="1210.5">-1h,3m,30s</text>
<text x="3344.5" y="1210.5">-1h,3m</text>
</g>
<text x="1690" y="1252" font-size="17.4" fill="#e6e6e6" stroke-width="0" text-anchor="middle" style="stroke-width:0">t0 = Mon Nov 03 2025 13:37:59 UTC [1446212297.5000]</text>
</svg></body></html>
